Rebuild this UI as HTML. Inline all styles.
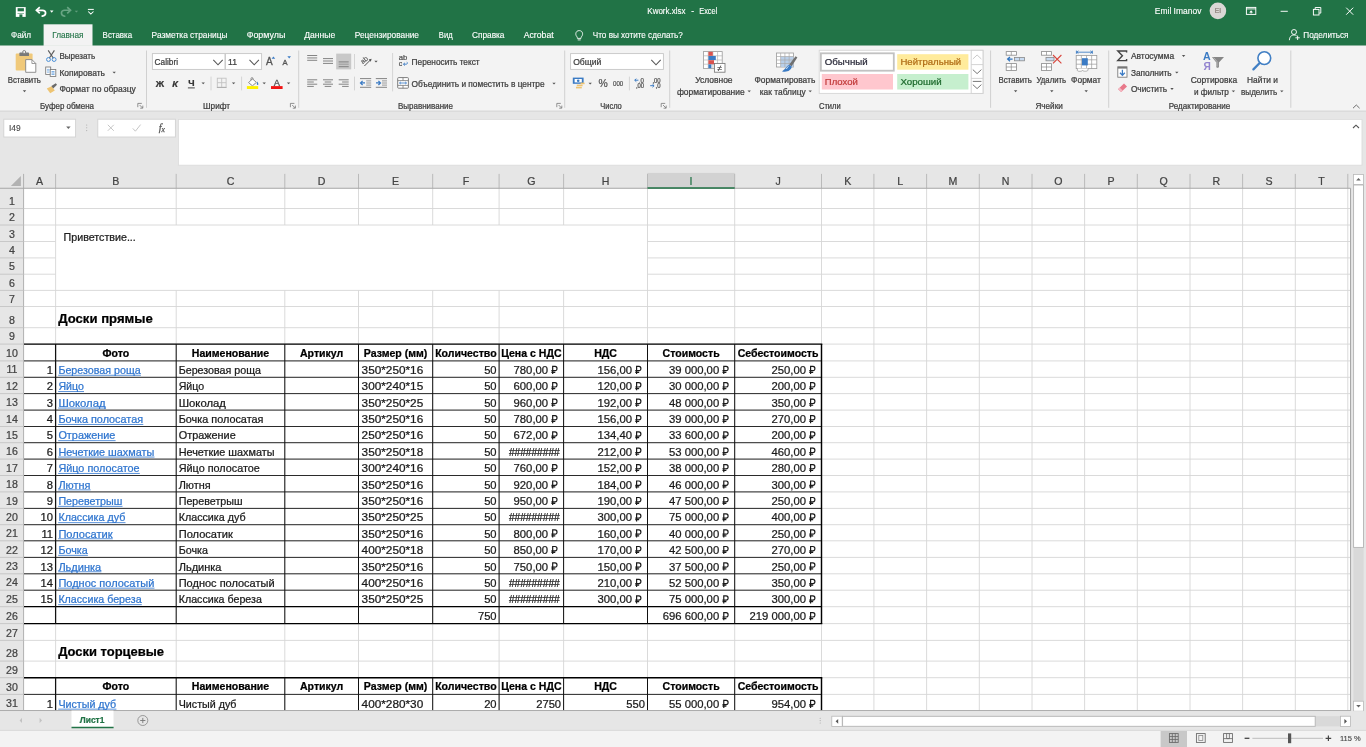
<!DOCTYPE html>
<html lang="ru"><head><meta charset="utf-8"><title>Kwork.xlsx - Excel</title>
<style>html,body{margin:0;padding:0;background:#e6e6e6;overflow:hidden}body{width:1366px;height:747px;font-family:"Liberation Sans",sans-serif}svg{display:block;filter:blur(0.35px)}text{font-family:"Liberation Sans",sans-serif;white-space:pre}.lk{text-decoration:underline;text-decoration-thickness:0.75px;text-underline-offset:0.9px;text-decoration-skip-ink:none}</style></head><body>
<svg width="1366" height="747" viewBox="0 0 1366 747" font-family="'Liberation Sans', sans-serif">
<rect x="0" y="0" width="1366" height="747" fill="#e6e6e6"/>
<rect x="0" y="0" width="1366" height="45.7" fill="#217346"/>
<rect x="0" y="45.7" width="1366" height="65.2" fill="#f3f3f3"/>
<line x1="0" y1="111.1" x2="1366" y2="111.1" stroke="#d4d4d4" stroke-width="1"/>
<rect x="15.8" y="7.1" width="9.9" height="9.8" fill="#fff"/>
<rect x="17.6" y="8.2" width="6.3" height="3.1" fill="#217346"/>
<rect x="17.5" y="13.1" width="6.5" height="0.9" fill="#217346" opacity="0.55"/>
<rect x="19.4" y="14.4" width="3" height="2.6" fill="#217346"/>
<path d="M39.8 7.2L36.4 10.3L39.8 13.4" fill="none" stroke="#fff" stroke-width="1.7" stroke-linejoin="miter"/>
<path d="M37.0 10.3H42.4C46.6 10.3 46.8 15.4 42.2 16.2" fill="none" stroke="#fff" stroke-width="1.7" stroke-linecap="round"/>
<path d="M49.9 10.55h3.6l-1.8 2.1z" fill="#fff"/>
<path d="M67.2 7.2L70.6 10.3L67.2 13.4" fill="none" stroke="#69a584" stroke-width="1.6" stroke-linejoin="miter"/>
<path d="M70.0 10.3H64.6C60.4 10.3 60.2 15.4 64.8 16.2" fill="none" stroke="#69a584" stroke-width="1.6" stroke-linecap="round"/>
<path d="M74.7 10.65h3.4l-1.7 1.9z" fill="#5f9d7b"/>
<line x1="87.9" y1="9.4" x2="93.8" y2="9.4" stroke="#fff" stroke-width="1"/>
<path d="M88.2 11.5L90.85 14.1L93.5 11.5" fill="none" stroke="#fff" stroke-width="1.05"/>
<text x="647.3" y="14.2" font-size="8.5" fill="#fff" textLength="38.2" lengthAdjust="spacingAndGlyphs" stroke="#fff" stroke-width="0.12">Kwork.xlsx</text>
<text x="691.2" y="14.2" font-size="8.5" fill="#fff" stroke="#fff" stroke-width="0.12">-</text>
<text x="699.2" y="14.2" font-size="8.5" fill="#fff" textLength="18.2" lengthAdjust="spacingAndGlyphs" stroke="#fff" stroke-width="0.12">Excel</text>
<text x="1154.8" y="14.2" font-size="8.5" fill="#fff" textLength="46.6" lengthAdjust="spacingAndGlyphs" stroke="#fff" stroke-width="0.12">Emil Imanov</text>
<circle cx="1217.9" cy="10.9" r="8.3" fill="#dad7d5"/>
<text x="1217.9" y="13.4" font-size="6.6" fill="#8c8079" text-anchor="middle" stroke="#8c8079" stroke-width="0.24">EI</text>
<rect x="1246.4" y="7.4" width="9.4" height="7" fill="none" stroke="#fff" stroke-width="0.95"/>
<path d="M1249.2 12.6L1251.1 10.3L1253 12.6Z M1250.6 12.4h1v1.2h-1z" fill="#fff"/>
<line x1="1246.4" y1="8.9" x2="1255.8" y2="8.9" stroke="#fff" stroke-width="0.9"/>
<line x1="1280.6" y1="11.3" x2="1287.8" y2="11.3" stroke="#fff" stroke-width="0.95"/>
<rect x="1313.4" y="9.4" width="5.6" height="5.6" fill="none" stroke="#fff" stroke-width="0.95"/>
<path d="M1315.2 9.2V7.5H1320.8V13.1H1319.2" fill="none" stroke="#fff" stroke-width="0.95"/>
<path d="M1346.2 7.7L1353.2 14.7M1353.2 7.7L1346.2 14.7" fill="none" stroke="#fff" stroke-width="1"/>
<circle cx="1294" cy="32" r="2.5" fill="none" stroke="#fff" stroke-width="0.9"/>
<path d="M1289.4 40.2C1289.6 36.4 1291.6 35.0 1294.0 35.0C1295.2 35.0 1296.0 35.3 1296.6 35.8" fill="none" stroke="#fff" stroke-width="0.9"/>
<path d="M1297.6 35.6V40.0M1295.4 37.8H1299.8" fill="none" stroke="#fff" stroke-width="0.9"/>
<text x="1303.3" y="37.8" font-size="8.35" fill="#fff" textLength="45.2" lengthAdjust="spacingAndGlyphs" stroke="#fff" stroke-width="0.12">Поделиться</text>
<rect x="43.6" y="24.3" width="48.9" height="21.6" fill="#f3f3f3"/>
<text x="11" y="37.8" font-size="8.35" fill="#fff" textLength="20" lengthAdjust="spacingAndGlyphs" stroke="#fff" stroke-width="0.12">Файл</text>
<text x="52.2" y="37.8" font-size="8.35" fill="#217346" textLength="31.2" lengthAdjust="spacingAndGlyphs" stroke="#217346" stroke-width="0.12">Главная</text>
<text x="102.6" y="37.8" font-size="8.35" fill="#fff" textLength="29.5" lengthAdjust="spacingAndGlyphs" stroke="#fff" stroke-width="0.12">Вставка</text>
<text x="151.6" y="37.8" font-size="8.35" fill="#fff" textLength="76" lengthAdjust="spacingAndGlyphs" stroke="#fff" stroke-width="0.12">Разметка страницы</text>
<text x="246.7" y="37.8" font-size="8.35" fill="#fff" textLength="38.6" lengthAdjust="spacingAndGlyphs" stroke="#fff" stroke-width="0.12">Формулы</text>
<text x="304.2" y="37.8" font-size="8.35" fill="#fff" textLength="31" lengthAdjust="spacingAndGlyphs" stroke="#fff" stroke-width="0.12">Данные</text>
<text x="354.8" y="37.8" font-size="8.35" fill="#fff" textLength="64.2" lengthAdjust="spacingAndGlyphs" stroke="#fff" stroke-width="0.12">Рецензирование</text>
<text x="438.8" y="37.8" font-size="8.35" fill="#fff" textLength="13.8" lengthAdjust="spacingAndGlyphs" stroke="#fff" stroke-width="0.12">Вид</text>
<text x="471.9" y="37.8" font-size="8.35" fill="#fff" textLength="32.6" lengthAdjust="spacingAndGlyphs" stroke="#fff" stroke-width="0.12">Справка</text>
<text x="523.7" y="37.8" font-size="8.35" fill="#fff" textLength="30" lengthAdjust="spacingAndGlyphs" stroke="#fff" stroke-width="0.12">Acrobat</text>
<path d="M576.6 36.2C575.2 34.8 575.4 30.6 579.2 30.6C583.0 30.6 583.2 34.8 581.8 36.2C581.2 36.9 581.0 37.6 581.0 38.4H577.4C577.4 37.6 577.2 36.9 576.6 36.2Z" fill="none" stroke="#fff" stroke-width="0.85"/>
<line x1="577.7" y1="39.9" x2="580.7" y2="39.9" stroke="#fff" stroke-width="0.85"/>
<text x="592.8" y="37.8" font-size="8.35" fill="#fff" textLength="90" lengthAdjust="spacingAndGlyphs" stroke="#fff" stroke-width="0.12">Что вы хотите сделать?</text>
<rect x="15.7" y="53.4" width="16.9" height="17.2" fill="#f0c97a" rx="1"/>
<rect x="19.4" y="52.6" width="9.6" height="3.4" fill="#7a7a7a" rx="0.6"/>
<circle cx="24.2" cy="52" r="1.5" fill="#f3f3f3" stroke="#7a7a7a" stroke-width="0.9"/>
<path d="M25.7 59.6H31.9L35.8 63.5V72.3H25.7Z" fill="#fff" stroke="#858585" stroke-width="0.9"/>
<path d="M31.9 59.6V63.5H35.8" fill="none" stroke="#858585" stroke-width="0.8"/>
<text x="7.7" y="83.3" font-size="8.35" fill="#3e3e3e" textLength="33.2" lengthAdjust="spacingAndGlyphs" stroke="#3e3e3e" stroke-width="0.24">Вставить</text>
<path d="M22.8 90.25h3.4l-1.7 1.9z" fill="#555"/>
<path d="M48.2 50.4L53.4 58.2M54.4 50.4L49.2 58.2" fill="none" stroke="#5e5e5e" stroke-width="1.15"/>
<circle cx="48.5" cy="59.5" r="1.95" fill="none" stroke="#4a8fd6" stroke-width="1"/>
<circle cx="54.1" cy="59.5" r="1.95" fill="none" stroke="#4a8fd6" stroke-width="1"/>
<text x="59.4" y="59" font-size="8.35" fill="#3e3e3e" textLength="35.7" lengthAdjust="spacingAndGlyphs" stroke="#3e3e3e" stroke-width="0.24">Вырезать</text>
<rect x="45.7" y="67" width="5" height="7.4" fill="#fff" stroke="#777" stroke-width="0.85"/>
<line x1="46.9" y1="69.4" x2="49.5" y2="69.4" stroke="#6aa3de" stroke-width="0.7"/>
<line x1="46.9" y1="70.8" x2="49.5" y2="70.8" stroke="#6aa3de" stroke-width="0.7"/>
<line x1="46.9" y1="72.2" x2="49.5" y2="72.2" stroke="#6aa3de" stroke-width="0.7"/>
<rect x="50.2" y="69.5" width="5.6" height="6.9" fill="#fff" stroke="#777" stroke-width="0.85"/>
<line x1="51.5" y1="71.6" x2="54.5" y2="71.6" stroke="#4a8fd6" stroke-width="0.75"/>
<line x1="51.5" y1="73" x2="54.5" y2="73" stroke="#4a8fd6" stroke-width="0.75"/>
<line x1="51.5" y1="74.4" x2="54.5" y2="74.4" stroke="#4a8fd6" stroke-width="0.75"/>
<text x="59.4" y="75.6" font-size="8.35" fill="#3e3e3e" textLength="45.6" lengthAdjust="spacingAndGlyphs" stroke="#3e3e3e" stroke-width="0.24">Копировать</text>
<path d="M112.5 71.65h3.4l-1.7 1.9z" fill="#555"/>
<path d="M46.8 88.6L51.6 86.2L54.8 90.6L50.2 93.2Z" fill="#eec472"/>
<path d="M51.4 86.0L55.8 83.2L57.0 84.8L53.2 88.6Z" fill="#6a6a6a"/>
<text x="59.4" y="92" font-size="8.35" fill="#3e3e3e" textLength="76.4" lengthAdjust="spacingAndGlyphs" stroke="#3e3e3e" stroke-width="0.24">Формат по образцу</text>
<text x="40" y="108.6" font-size="8.35" fill="#3e3e3e" textLength="54" lengthAdjust="spacingAndGlyphs" stroke="#3e3e3e" stroke-width="0.24">Буфер обмена</text>
<path d="M137.8 107.2V103.4H141.8" fill="none" stroke="#777" stroke-width="0.8"/>
<path d="M142.8 108.2H140.2M142.8 108.2V105.6M142.6 108L139.6 105" fill="none" stroke="#777" stroke-width="0.8"/>
<line x1="146.5" y1="50.5" x2="146.5" y2="107.8" stroke="#d0d0d0" stroke-width="1"/>
<rect x="152.4" y="53.6" width="72.6" height="15.8" fill="#fff" stroke="#c6c6c6" stroke-width="0.9"/>
<rect x="225.4" y="53.6" width="36.2" height="15.8" fill="#fff" stroke="#c6c6c6" stroke-width="0.9"/>
<text x="154.6" y="65" font-size="8.65" fill="#3e3e3e" textLength="23.4" lengthAdjust="spacingAndGlyphs" stroke="#3e3e3e" stroke-width="0.24">Calibri</text>
<text x="228" y="65" font-size="8.65" fill="#3e3e3e" stroke="#3e3e3e" stroke-width="0.24">11</text>
<path d="M213.3 59.85L218 64.75L222.7 59.85" fill="none" stroke="#555" stroke-width="1.05"/>
<path d="M249.5 59.85L254.2 64.75L258.9 59.85" fill="none" stroke="#555" stroke-width="1.05"/>
<text x="266" y="65.3" font-size="10" fill="#555" stroke="#555" stroke-width="0.3">A</text>
<path d="M271.6 58.8L273.4 56.4L275.2 58.8Z" fill="#3b7bc4"/>
<text x="282.5" y="65.3" font-size="7.6" fill="#555" stroke="#555" stroke-width="0.3">A</text>
<path d="M287.4 56.2H291.0L289.2 58.4Z" fill="#3b7bc4"/>
<text x="159.9" y="86.6" font-size="9.2" fill="#333" text-anchor="middle" font-weight="bold" stroke="#333" stroke-width="0.24">Ж</text>
<text x="175" y="86.6" font-size="9.2" fill="#333" text-anchor="middle" font-weight="bold" font-style="italic" stroke="#333" stroke-width="0.24">К</text>
<text x="191.3" y="86.4" font-size="9" fill="#333" text-anchor="middle" font-weight="bold" stroke="#333" stroke-width="0.24">Ч</text>
<line x1="187.9" y1="87.9" x2="194.8" y2="87.9" stroke="#333" stroke-width="0.9"/>
<path d="M201.5 82.45h3.4l-1.7 1.9z" fill="#555"/>
<line x1="211" y1="76.6" x2="211" y2="90.4" stroke="#d4d4d4" stroke-width="1"/>
<rect x="217.3" y="78.2" width="8.8" height="9" fill="none" stroke="#c2c2c2" stroke-width="0.9"/>
<line x1="221.7" y1="78.2" x2="221.7" y2="87.2" stroke="#c2c2c2" stroke-width="0.9"/>
<line x1="217.3" y1="82.7" x2="226.1" y2="82.7" stroke="#c2c2c2" stroke-width="0.9"/>
<line x1="216.9" y1="87.5" x2="226.5" y2="87.5" stroke="#b0b0b0" stroke-width="1"/>
<path d="M231.9 82.45h3.4l-1.7 1.9z" fill="#555"/>
<line x1="241.6" y1="76.6" x2="241.6" y2="90.4" stroke="#d4d4d4" stroke-width="1"/>
<path d="M248.6 82.6L252.4 78.8L256.4 82.4L252.4 85.8Z" fill="#fff" stroke="#7a7a7a" stroke-width="0.85" stroke-linejoin="round"/>
<path d="M251.0 80.4V78.6C251.0 77.2 253.0 77.2 253.0 78.6V79.6" fill="none" stroke="#7a7a7a" stroke-width="0.8"/>
<path d="M257.2 81.4C258.4 83.0 258.8 84.4 257.9 84.9C257.0 85.3 256.4 83.8 257.2 81.4Z" fill="#3b7bc4"/>
<rect x="246.9" y="86.1" width="11.3" height="2.9" fill="#fff200"/>
<path d="M262.5 82.45h3.4l-1.7 1.9z" fill="#555"/>
<text x="276.9" y="85.7" font-size="9.3" fill="#555" text-anchor="middle" stroke="#555" stroke-width="0.3">A</text>
<rect x="271" y="86.1" width="11.6" height="2.9" fill="#f01414"/>
<path d="M286.9 82.45h3.4l-1.7 1.9z" fill="#555"/>
<text x="203.1" y="108.6" font-size="8.35" fill="#3e3e3e" textLength="27" lengthAdjust="spacingAndGlyphs" stroke="#3e3e3e" stroke-width="0.24">Шрифт</text>
<path d="M290.4 107.2V103.4H294.4" fill="none" stroke="#777" stroke-width="0.8"/>
<path d="M295.4 108.2H292.8M295.4 108.2V105.6M295.2 108L292.2 105" fill="none" stroke="#777" stroke-width="0.8"/>
<line x1="298.7" y1="50.5" x2="298.7" y2="107.8" stroke="#d0d0d0" stroke-width="1"/>
<rect x="336.2" y="53.6" width="15" height="15.8" fill="#c8c8c8"/>
<line x1="307.2" y1="55.5" x2="317.2" y2="55.5" stroke="#7d7d7d" stroke-width="0.95"/>
<line x1="307.2" y1="57.9" x2="317.2" y2="57.9" stroke="#a9a9a9" stroke-width="1.5"/>
<line x1="307.2" y1="60.3" x2="317.2" y2="60.3" stroke="#7d7d7d" stroke-width="0.95"/>
<line x1="323" y1="58.6" x2="333" y2="58.6" stroke="#7d7d7d" stroke-width="0.95"/>
<line x1="323" y1="61" x2="333" y2="61" stroke="#a9a9a9" stroke-width="1.5"/>
<line x1="323" y1="63.4" x2="333" y2="63.4" stroke="#7d7d7d" stroke-width="0.95"/>
<line x1="338.7" y1="61.9" x2="348.7" y2="61.9" stroke="#7d7d7d" stroke-width="0.95"/>
<line x1="338.7" y1="64.3" x2="348.7" y2="64.3" stroke="#a9a9a9" stroke-width="1.5"/>
<line x1="338.7" y1="66.7" x2="348.7" y2="66.7" stroke="#7d7d7d" stroke-width="0.95"/>
<line x1="354.5" y1="54" x2="354.5" y2="69" stroke="#d4d4d4" stroke-width="1"/>
<line x1="307.2" y1="79.8" x2="317.2" y2="79.8" stroke="#7d7d7d" stroke-width="0.95"/>
<line x1="307.2" y1="82" x2="313.8" y2="82" stroke="#7d7d7d" stroke-width="0.95"/>
<line x1="307.2" y1="84.2" x2="317.2" y2="84.2" stroke="#7d7d7d" stroke-width="0.95"/>
<line x1="307.2" y1="86.4" x2="313.8" y2="86.4" stroke="#7d7d7d" stroke-width="0.95"/>
<line x1="323" y1="79.8" x2="333" y2="79.8" stroke="#7d7d7d" stroke-width="0.95"/>
<line x1="324.7" y1="82" x2="331.3" y2="82" stroke="#7d7d7d" stroke-width="0.95"/>
<line x1="323" y1="84.2" x2="333" y2="84.2" stroke="#7d7d7d" stroke-width="0.95"/>
<line x1="324.7" y1="86.4" x2="331.3" y2="86.4" stroke="#7d7d7d" stroke-width="0.95"/>
<line x1="338.7" y1="79.8" x2="348.7" y2="79.8" stroke="#7d7d7d" stroke-width="0.95"/>
<line x1="342.1" y1="82" x2="348.7" y2="82" stroke="#7d7d7d" stroke-width="0.95"/>
<line x1="338.7" y1="84.2" x2="348.7" y2="84.2" stroke="#7d7d7d" stroke-width="0.95"/>
<line x1="342.1" y1="86.4" x2="348.7" y2="86.4" stroke="#7d7d7d" stroke-width="0.95"/>
<line x1="354.5" y1="76.6" x2="354.5" y2="90.4" stroke="#d4d4d4" stroke-width="1"/>
<text transform="rotate(-42 364.2 60.4)" x="360.6" y="62.4" font-size="6.8" fill="#555" stroke="#555" stroke-width="0.15">ab</text>
<path d="M364.4 66.0L370.6 59.8" fill="none" stroke="#555" stroke-width="1"/>
<path d="M371.6 58.8L368.6 59.6L370.8 61.8Z" fill="#555"/>
<path d="M374.3 60.65h3.4l-1.7 1.9z" fill="#555"/>
<line x1="360" y1="78.6" x2="371.2" y2="78.6" stroke="#7d7d7d" stroke-width="0.95"/>
<line x1="360" y1="87.3" x2="371.2" y2="87.3" stroke="#7d7d7d" stroke-width="0.95"/>
<line x1="366.2" y1="80.9" x2="371.2" y2="80.9" stroke="#9a9a9a" stroke-width="1"/>
<line x1="366.2" y1="83" x2="371.2" y2="83" stroke="#9a9a9a" stroke-width="1"/>
<line x1="366.2" y1="85.1" x2="371.2" y2="85.1" stroke="#9a9a9a" stroke-width="1"/>
<path d="M365 82.95H360.6M362.6 80.9L360.5 82.95L362.6 85.0" fill="none" stroke="#3b7bc4" stroke-width="1.25"/>
<line x1="375.8" y1="78.6" x2="387" y2="78.6" stroke="#7d7d7d" stroke-width="0.95"/>
<line x1="375.8" y1="87.3" x2="387" y2="87.3" stroke="#7d7d7d" stroke-width="0.95"/>
<line x1="382" y1="80.9" x2="387" y2="80.9" stroke="#9a9a9a" stroke-width="1"/>
<line x1="382" y1="83" x2="387" y2="83" stroke="#9a9a9a" stroke-width="1"/>
<line x1="382" y1="85.1" x2="387" y2="85.1" stroke="#9a9a9a" stroke-width="1"/>
<path d="M376 82.95H380.4M378.4 80.9L380.5 82.95L378.4 85.0" fill="none" stroke="#3b7bc4" stroke-width="1.25"/>
<line x1="392.6" y1="53" x2="392.6" y2="91.4" stroke="#d4d4d4" stroke-width="1"/>
<text x="398.8" y="59.7" font-size="7" fill="#555" textLength="8.6" lengthAdjust="spacingAndGlyphs" stroke="#555" stroke-width="0.24">ab</text>
<text x="398.8" y="65.7" font-size="7" fill="#555" stroke="#555" stroke-width="0.24">c</text>
<path d="M403.6 64.2H406.4C407.6 64.2 407.6 62.2 406.8 62.0" fill="none" stroke="#3b7bc4" stroke-width="0.9"/>
<path d="M405.0 62.8L403.4 64.2L405.0 65.6" fill="none" stroke="#3b7bc4" stroke-width="0.9"/>
<text x="411.6" y="64.9" font-size="8.35" fill="#3e3e3e" textLength="68" lengthAdjust="spacingAndGlyphs" stroke="#3e3e3e" stroke-width="0.24">Переносить текст</text>
<rect x="397.7" y="77.6" width="10.7" height="10.6" fill="#fff" stroke="#777" stroke-width="0.95" rx="0.8"/>
<line x1="397.8" y1="80.6" x2="408.2" y2="80.6" stroke="#777" stroke-width="0.8"/>
<line x1="397.8" y1="85.4" x2="408.2" y2="85.4" stroke="#777" stroke-width="0.8"/>
<line x1="403" y1="77.7" x2="403" y2="80.6" stroke="#777" stroke-width="0.8"/>
<line x1="403" y1="85.4" x2="403" y2="88.3" stroke="#777" stroke-width="0.8"/>
<path d="M399.6 83.0H406.4M400.8 81.9L399.5 83.0L400.8 84.1M405.2 81.9L406.5 83.0L405.2 84.1" fill="none" stroke="#3b7bc4" stroke-width="0.85"/>
<text x="411.6" y="86.9" font-size="8.35" fill="#3e3e3e" textLength="133" lengthAdjust="spacingAndGlyphs" stroke="#3e3e3e" stroke-width="0.24">Объединить и поместить в центре</text>
<path d="M552.3 82.65h3.4l-1.7 1.9z" fill="#555"/>
<text x="398" y="108.6" font-size="8.35" fill="#3e3e3e" textLength="55" lengthAdjust="spacingAndGlyphs" stroke="#3e3e3e" stroke-width="0.24">Выравнивание</text>
<path d="M556.8 107.2V103.4H560.8" fill="none" stroke="#777" stroke-width="0.8"/>
<path d="M561.8 108.2H559.2M561.8 108.2V105.6M561.6 108L558.6 105" fill="none" stroke="#777" stroke-width="0.8"/>
<line x1="564.7" y1="50.5" x2="564.7" y2="107.8" stroke="#d0d0d0" stroke-width="1"/>
<rect x="570.6" y="53.6" width="92.8" height="15.8" fill="#fff" stroke="#c6c6c6" stroke-width="0.9"/>
<text x="573.2" y="65" font-size="8.65" fill="#3e3e3e" textLength="28.2" lengthAdjust="spacingAndGlyphs" stroke="#3e3e3e" stroke-width="0.24">Общий</text>
<path d="M651.3 59.85L656 64.75L660.7 59.85" fill="none" stroke="#555" stroke-width="1.05"/>
<rect x="572.8" y="77.6" width="10.8" height="6.2" fill="#3b7bc4"/>
<rect x="574.6" y="79" width="7.2" height="3.4" fill="#fff"/>
<circle cx="578.2" cy="80.7" r="1.3" fill="#3b7bc4"/>
<rect x="576.8" y="84.6" width="5.8" height="1.6" fill="#eec472"/>
<rect x="576" y="86.8" width="5.8" height="1.6" fill="#eec472"/>
<rect x="580.6" y="82.6" width="4" height="1.6" fill="#eec472"/>
<path d="M588.5 82.65h3.4l-1.7 1.9z" fill="#555"/>
<text x="603" y="87" font-size="10.4" fill="#555" text-anchor="middle" stroke="#555" stroke-width="0.24">%</text>
<text x="618.1" y="85.6" font-size="6.9" fill="#555" text-anchor="middle" textLength="10.2" lengthAdjust="spacingAndGlyphs" stroke="#555" stroke-width="0.24">000</text>
<line x1="629.4" y1="76.6" x2="629.4" y2="90.4" stroke="#d4d4d4" stroke-width="1"/>
<text x="640.4" y="82.7" font-size="6.3" fill="#555" textLength="3.4" lengthAdjust="spacingAndGlyphs" stroke="#555" stroke-width="0.24">0</text>
<text x="635.9" y="88.2" font-size="6.3" fill="#555" textLength="8.2" lengthAdjust="spacingAndGlyphs" stroke="#555" stroke-width="0.24">,00</text>
<circle cx="639.6" cy="82.3" r="0.45" fill="#555"/>
<path d="M638.4 80.2H634.8M636.3 78.7L634.7 80.2L636.3 81.7" fill="none" stroke="#3b7bc4" stroke-width="1"/>
<text x="652.4" y="82.7" font-size="6.3" fill="#555" textLength="8.2" lengthAdjust="spacingAndGlyphs" stroke="#555" stroke-width="0.24">,00</text>
<text x="655.6" y="88.2" font-size="6.3" fill="#555" textLength="5" lengthAdjust="spacingAndGlyphs" stroke="#555" stroke-width="0.24">,0</text>
<path d="M650.2 85.7H654.0M652.5 84.2L654.1 85.7L652.5 87.2" fill="none" stroke="#3b7bc4" stroke-width="1"/>
<text x="600.2" y="108.6" font-size="8.35" fill="#3e3e3e" textLength="21.6" lengthAdjust="spacingAndGlyphs" stroke="#3e3e3e" stroke-width="0.24">Число</text>
<path d="M661.2 107.2V103.4H665.2" fill="none" stroke="#777" stroke-width="0.8"/>
<path d="M666.2 108.2H663.6M666.2 108.2V105.6M666 108L663 105" fill="none" stroke="#777" stroke-width="0.8"/>
<line x1="669.7" y1="50.5" x2="669.7" y2="107.8" stroke="#d0d0d0" stroke-width="1"/>
<rect x="703.6" y="51.6" width="18.6" height="16.8" fill="#fff" stroke="#9a9a9a" stroke-width="0.8"/>
<line x1="708.25" y1="51.6" x2="708.25" y2="68.4" stroke="#b5b5b5" stroke-width="0.7"/>
<line x1="712.9" y1="51.6" x2="712.9" y2="68.4" stroke="#b5b5b5" stroke-width="0.7"/>
<line x1="717.55" y1="51.6" x2="717.55" y2="68.4" stroke="#b5b5b5" stroke-width="0.7"/>
<line x1="703.6" y1="55.8" x2="722.2" y2="55.8" stroke="#b5b5b5" stroke-width="0.7"/>
<line x1="703.6" y1="60" x2="722.2" y2="60" stroke="#b5b5b5" stroke-width="0.7"/>
<line x1="703.6" y1="64.2" x2="722.2" y2="64.2" stroke="#b5b5b5" stroke-width="0.7"/>
<rect x="708.4" y="51.8" width="4.4" height="4" fill="#d9534f"/>
<rect x="708.4" y="56" width="7.4" height="4" fill="#3b7bc4"/>
<rect x="708.4" y="60.2" width="5.6" height="4" fill="#d9534f"/>
<rect x="708.4" y="64.4" width="3" height="3.8" fill="#3b7bc4"/>
<rect x="714.4" y="63.4" width="10.6" height="8.8" fill="#fff" stroke="#777" stroke-width="0.85"/>
<text x="719.7" y="70.8" font-size="8.4" fill="#444" text-anchor="middle" stroke="#444" stroke-width="0.24">≠</text>
<text x="695.2" y="83.3" font-size="8.35" fill="#3e3e3e" textLength="37.4" lengthAdjust="spacingAndGlyphs" stroke="#3e3e3e" stroke-width="0.24">Условное</text>
<text x="676.9" y="95" font-size="8.35" fill="#3e3e3e" textLength="67.8" lengthAdjust="spacingAndGlyphs" stroke="#3e3e3e" stroke-width="0.24">форматирование</text>
<path d="M747.5 90.45h3.4l-1.7 1.9z" fill="#555"/>
<rect x="776.4" y="53" width="17" height="14" fill="#fff" stroke="#9a9a9a" stroke-width="0.8"/>
<rect x="780.6" y="56.6" width="12.8" height="10.4" fill="#b9cfe9"/>
<line x1="780.65" y1="53" x2="780.65" y2="67" stroke="#a9a9a9" stroke-width="0.7"/>
<line x1="784.9" y1="53" x2="784.9" y2="67" stroke="#a9a9a9" stroke-width="0.7"/>
<line x1="789.15" y1="53" x2="789.15" y2="67" stroke="#a9a9a9" stroke-width="0.7"/>
<line x1="776.4" y1="56.5" x2="793.4" y2="56.5" stroke="#a9a9a9" stroke-width="0.7"/>
<line x1="776.4" y1="60" x2="793.4" y2="60" stroke="#a9a9a9" stroke-width="0.7"/>
<line x1="776.4" y1="63.5" x2="793.4" y2="63.5" stroke="#a9a9a9" stroke-width="0.7"/>
<path d="M797.4 57.6L791.6 66.2L789.2 64.6L795.6 56.2Z" fill="#707070"/>
<path d="M789.4 65.0C786.8 65.4 786.2 68.6 782.0 71.4C786.8 72.6 791.2 70.8 791.8 66.6Z" fill="#3b7bc4"/>
<path d="M788.2 66.6C787.4 67.0 787.0 67.8 786.6 68.6" fill="none" stroke="#dbe8f7" stroke-width="1" stroke-linecap="round"/>
<text x="754.5" y="83.3" font-size="8.35" fill="#3e3e3e" textLength="60.8" lengthAdjust="spacingAndGlyphs" stroke="#3e3e3e" stroke-width="0.24">Форматировать</text>
<text x="759.7" y="95" font-size="8.35" fill="#3e3e3e" textLength="46" lengthAdjust="spacingAndGlyphs" stroke="#3e3e3e" stroke-width="0.24">как таблицу</text>
<path d="M808.5 90.45h3.4l-1.7 1.9z" fill="#555"/>
<rect x="819.2" y="50.3" width="163.8" height="43.1" fill="#fff" stroke="#d6d6d6" stroke-width="0.9"/>
<rect x="820.9" y="53.3" width="72.9" height="17.4" fill="#fff" stroke="#c2c2c2" stroke-width="1.8"/>
<text x="824.8" y="65" font-size="9.6" fill="#2b2b3a" textLength="42.8" lengthAdjust="spacingAndGlyphs" stroke="#2b2b3a" stroke-width="0.24">Обычный</text>
<rect x="897.2" y="54.2" width="71.2" height="15.5" fill="#ffeb9c"/>
<text x="900.4" y="65" font-size="9.6" fill="#b06b14" textLength="60.8" lengthAdjust="spacingAndGlyphs" stroke="#b06b14" stroke-width="0.24">Нейтральный</text>
<rect x="821.8" y="74" width="71.2" height="15.5" fill="#ffc7ce"/>
<text x="824.8" y="84.9" font-size="9.6" fill="#c23b3b" textLength="33" lengthAdjust="spacingAndGlyphs" stroke="#c23b3b" stroke-width="0.24">Плохой</text>
<rect x="897.2" y="74" width="71.2" height="15.5" fill="#c6efce"/>
<text x="900.4" y="84.9" font-size="9.6" fill="#1e6b2e" textLength="41.2" lengthAdjust="spacingAndGlyphs" stroke="#1e6b2e" stroke-width="0.24">Хороший</text>
<rect x="971.2" y="50.3" width="11.8" height="43.1" fill="#fff" stroke="#cfcfcf" stroke-width="0.9"/>
<line x1="971.2" y1="64.6" x2="983" y2="64.6" stroke="#cfcfcf" stroke-width="0.9"/>
<line x1="971.2" y1="78.4" x2="983" y2="78.4" stroke="#cfcfcf" stroke-width="0.9"/>
<path d="M972.8 59.0L977.1 55.0L981.4 59.0" fill="none" stroke="#c4c4c4" stroke-width="0.9"/>
<path d="M972.8 69.6L977.1 73.6L981.4 69.6" fill="none" stroke="#666" stroke-width="0.9"/>
<line x1="972.8" y1="81.4" x2="981.4" y2="81.4" stroke="#666" stroke-width="0.9"/>
<path d="M972.8 84.6L977.1 88.6L981.4 84.6" fill="none" stroke="#666" stroke-width="0.9"/>
<text x="819" y="108.6" font-size="8.35" fill="#3e3e3e" textLength="21.6" lengthAdjust="spacingAndGlyphs" stroke="#3e3e3e" stroke-width="0.24">Стили</text>
<line x1="990.6" y1="50.5" x2="990.6" y2="107.8" stroke="#d0d0d0" stroke-width="1"/>
<rect x="1006.2" y="51.6" width="10.2" height="3.6" fill="#fff" stroke="#8a8a8a" stroke-width="0.8"/>
<line x1="1011.3" y1="51.6" x2="1011.3" y2="55.2" stroke="#8a8a8a" stroke-width="0.7"/>
<rect x="1006.2" y="63.6" width="10.2" height="6.8" fill="#fff" stroke="#8a8a8a" stroke-width="0.8"/>
<line x1="1011.3" y1="63.6" x2="1011.3" y2="70.4" stroke="#8a8a8a" stroke-width="0.7"/>
<line x1="1006.2" y1="67" x2="1016.4" y2="67" stroke="#8a8a8a" stroke-width="0.7"/>
<rect x="1014.4" y="57.4" width="10.2" height="3.4" fill="#c9dcf2" stroke="#8a8a8a" stroke-width="0.8"/>
<line x1="1019.5" y1="57.4" x2="1019.5" y2="60.8" stroke="#8a8a8a" stroke-width="0.7"/>
<path d="M1012.6 59.1H1008.2M1010.0 57.0L1007.6 59.1L1010.0 61.2" fill="none" stroke="#2f74c0" stroke-width="1.2"/>
<text x="998.4" y="83.3" font-size="8.35" fill="#3e3e3e" textLength="33.4" lengthAdjust="spacingAndGlyphs" stroke="#3e3e3e" stroke-width="0.24">Вставить</text>
<path d="M1013.9 90.25h3.4l-1.7 1.9z" fill="#555"/>
<rect x="1041.4" y="51.6" width="10.2" height="3.6" fill="#fff" stroke="#8a8a8a" stroke-width="0.8"/>
<line x1="1046.5" y1="51.6" x2="1046.5" y2="55.2" stroke="#8a8a8a" stroke-width="0.7"/>
<rect x="1041.4" y="63.6" width="10.2" height="6.8" fill="#fff" stroke="#8a8a8a" stroke-width="0.8"/>
<line x1="1046.5" y1="63.6" x2="1046.5" y2="70.4" stroke="#8a8a8a" stroke-width="0.7"/>
<line x1="1041.4" y1="67" x2="1051.6" y2="67" stroke="#8a8a8a" stroke-width="0.7"/>
<rect x="1046" y="57.4" width="8" height="3.4" fill="#c9dcf2" stroke="#8a8a8a" stroke-width="0.8"/>
<path d="M1053.0 55.0L1061.4 63.4M1061.4 55.0L1053.0 63.4" fill="none" stroke="#d9453c" stroke-width="1.1"/>
<text x="1036.5" y="83.3" font-size="8.35" fill="#3e3e3e" textLength="29.6" lengthAdjust="spacingAndGlyphs" stroke="#3e3e3e" stroke-width="0.24">Удалить</text>
<path d="M1050.1 90.25h3.4l-1.7 1.9z" fill="#555"/>
<path d="M1076.4 52.2H1092.4M1076.4 50.6V53.8M1092.4 50.6V53.8M1078.4 50.8L1076.8 52.2L1078.4 53.6M1090.4 50.8L1092.0 52.2L1090.4 53.6" fill="none" stroke="#2f74c0" stroke-width="0.8"/>
<rect x="1076.2" y="55.4" width="20.6" height="13.2" fill="#fff" stroke="#9a9a9a" stroke-width="0.8"/>
<line x1="1081.35" y1="55.4" x2="1081.35" y2="68.6" stroke="#9a9a9a" stroke-width="0.7"/>
<line x1="1086.5" y1="55.4" x2="1086.5" y2="68.6" stroke="#9a9a9a" stroke-width="0.7"/>
<line x1="1091.65" y1="55.4" x2="1091.65" y2="68.6" stroke="#9a9a9a" stroke-width="0.7"/>
<line x1="1076.2" y1="59.8" x2="1096.8" y2="59.8" stroke="#9a9a9a" stroke-width="0.7"/>
<line x1="1076.2" y1="64.2" x2="1096.8" y2="64.2" stroke="#9a9a9a" stroke-width="0.7"/>
<rect x="1082" y="58.2" width="5.8" height="7.2" fill="#3b7bc4"/>
<path d="M1077.4 68.6V70.6C1077.4 71.6 1082.6 71.6 1082.6 70.2C1082.6 71.6 1088.0 71.6 1088.0 70.0V68.6" fill="#fff" stroke="#9a9a9a" stroke-width="0.8"/>
<text x="1071.1" y="83.3" font-size="8.35" fill="#3e3e3e" textLength="29.8" lengthAdjust="spacingAndGlyphs" stroke="#3e3e3e" stroke-width="0.24">Формат</text>
<path d="M1084.5 90.25h3.4l-1.7 1.9z" fill="#555"/>
<text x="1035.4" y="108.6" font-size="8.35" fill="#3e3e3e" textLength="27.4" lengthAdjust="spacingAndGlyphs" stroke="#3e3e3e" stroke-width="0.24">Ячейки</text>
<line x1="1108.7" y1="50.5" x2="1108.7" y2="107.8" stroke="#d0d0d0" stroke-width="1"/>
<path d="M1126.6 52.6V51.0H1117.8L1122.4 55.8L1117.8 60.6H1126.6V59.0" fill="none" stroke="#444" stroke-width="1.4"/>
<text x="1130.9" y="59" font-size="8.35" fill="#3e3e3e" textLength="43.2" lengthAdjust="spacingAndGlyphs" stroke="#3e3e3e" stroke-width="0.24">Автосумма</text>
<path d="M1181.9 55.05h3.4l-1.7 1.9z" fill="#555"/>
<rect x="1117.8" y="66.8" width="9.2" height="10.4" fill="#fff" stroke="#777" stroke-width="0.85"/>
<rect x="1117.8" y="66.8" width="9.2" height="1.8" fill="#777"/>
<path d="M1122.4 69.8V75.2M1120.0 72.8L1122.4 75.4L1124.8 72.8" fill="none" stroke="#3b7bc4" stroke-width="1.3"/>
<text x="1130.9" y="75.6" font-size="8.35" fill="#3e3e3e" textLength="40.8" lengthAdjust="spacingAndGlyphs" stroke="#3e3e3e" stroke-width="0.24">Заполнить</text>
<path d="M1175.1 71.65h3.4l-1.7 1.9z" fill="#555"/>
<path d="M1118.0 89.2L1124.0 83.6L1127.0 86.4L1121.2 92.0Z" fill="#e8788a"/>
<path d="M1118.0 89.2L1119.6 87.6L1122.8 90.6L1121.2 92.0Z" fill="#f4b6c0"/>
<text x="1130.9" y="92" font-size="8.35" fill="#3e3e3e" textLength="36.2" lengthAdjust="spacingAndGlyphs" stroke="#3e3e3e" stroke-width="0.24">Очистить</text>
<path d="M1170.3 88.05h3.4l-1.7 1.9z" fill="#555"/>
<text x="1203" y="59.9" font-size="10.6" fill="#3b7bc4" font-weight="bold">A</text>
<text x="1203.4" y="70.2" font-size="10.2" fill="#9384cf" font-weight="bold">Я</text>
<path d="M1212.0 57.0H1224.0L1218.9 62.4V67.0C1218.9 68.0 1216.3 68.0 1216.3 67.0V62.4Z" fill="#868686"/>
<path d="M1213.6 57.6L1217.0 61.6V66.6" fill="none" stroke="#c9c9c9" stroke-width="0.8"/>
<text x="1190.7" y="83.3" font-size="8.35" fill="#3e3e3e" textLength="46.4" lengthAdjust="spacingAndGlyphs" stroke="#3e3e3e" stroke-width="0.24">Сортировка</text>
<text x="1193.9" y="95" font-size="8.35" fill="#3e3e3e" textLength="35" lengthAdjust="spacingAndGlyphs" stroke="#3e3e3e" stroke-width="0.24">и фильтр</text>
<path d="M1231.7 90.45h3.4l-1.7 1.9z" fill="#555"/>
<circle cx="1264.3" cy="58.1" r="6.4" fill="#fff" stroke="#417fc4" stroke-width="1.6"/>
<line x1="1259.4" y1="63.2" x2="1253.4" y2="69.4" stroke="#417fc4" stroke-width="2.3" stroke-linecap="round"/>
<text x="1247.1" y="83.3" font-size="8.35" fill="#3e3e3e" textLength="30.8" lengthAdjust="spacingAndGlyphs" stroke="#3e3e3e" stroke-width="0.24">Найти и</text>
<text x="1241.1" y="95" font-size="8.35" fill="#3e3e3e" textLength="36" lengthAdjust="spacingAndGlyphs" stroke="#3e3e3e" stroke-width="0.24">выделить</text>
<path d="M1280.1 90.45h3.4l-1.7 1.9z" fill="#555"/>
<text x="1168.7" y="108.6" font-size="8.35" fill="#3e3e3e" textLength="61.6" lengthAdjust="spacingAndGlyphs" stroke="#3e3e3e" stroke-width="0.24">Редактирование</text>
<line x1="1290.8" y1="50.5" x2="1290.8" y2="107.8" stroke="#d0d0d0" stroke-width="1"/>
<path d="M1353 108.2L1356.3 105L1359.6 108.2" fill="none" stroke="#666" stroke-width="0.95"/>
<rect x="3.8" y="119.2" width="71.8" height="17.8" fill="#fff" stroke="#d2d2d2" stroke-width="0.9"/>
<text x="9" y="131.1" font-size="8.4" fill="#444" stroke="#444" stroke-width="0.1">I49</text>
<path d="M66.2 126.6h4.4l-2.2 2.4z" fill="#666"/>
<circle cx="86.7" cy="125" r="0.55" fill="#aaa"/>
<circle cx="86.7" cy="127.8" r="0.55" fill="#aaa"/>
<circle cx="86.7" cy="130.6" r="0.55" fill="#aaa"/>
<rect x="97.8" y="119.2" width="77.6" height="17.8" fill="#fff" stroke="#d2d2d2" stroke-width="0.9"/>
<path d="M107.8 124.8L113.8 130.8M113.8 124.8L107.8 130.8" fill="none" stroke="#c2c2c2" stroke-width="0.95"/>
<path d="M132.8 128.4L135.4 131.2L140.6 124.6" fill="none" stroke="#c2c2c2" stroke-width="0.95"/>
<text x="158.8" y="131.4" font-size="10.4" fill="#555" font-style="italic" style="font-family:'Liberation Serif', serif" stroke="#555" stroke-width="0.25">f</text>
<text x="161.6" y="131.8" font-size="7.6" fill="#555" font-style="italic" style="font-family:'Liberation Serif', serif" stroke="#555" stroke-width="0.25">x</text>
<rect x="178.4" y="119.4" width="1183.6" height="45.8" fill="#fff" stroke="#dcdcdc" stroke-width="0.9"/>
<path d="M1353.0 128.0L1356.0 125.2L1359.0 128.0" fill="none" stroke="#555" stroke-width="1.1"/>
<rect x="0" y="172.4" width="1350.6" height="15.9" fill="#e6e6e6"/>
<rect x="0" y="188.3" width="23.6" height="522.3" fill="#e6e6e6"/>
<rect x="23.6" y="188.3" width="1327" height="522.3" fill="#ffffff"/>
<clipPath id="shc"><rect x="0" y="172.4" width="1351.1" height="538.2"/></clipPath>
<g clip-path="url(#shc)">
<rect x="647.5" y="172.8" width="87.2" height="15.3" fill="#d2d2d2"/>
<line x1="23.6" y1="208.5" x2="1350.6" y2="208.5" stroke="#d6d6d6" stroke-width="0.9"/>
<line x1="23.6" y1="225" x2="1350.6" y2="225" stroke="#d6d6d6" stroke-width="0.9"/>
<line x1="23.6" y1="241.5" x2="55.6" y2="241.5" stroke="#d6d6d6" stroke-width="0.9"/>
<line x1="647.5" y1="241.5" x2="1350.6" y2="241.5" stroke="#d6d6d6" stroke-width="0.9"/>
<line x1="23.6" y1="257.9" x2="55.6" y2="257.9" stroke="#d6d6d6" stroke-width="0.9"/>
<line x1="647.5" y1="257.9" x2="1350.6" y2="257.9" stroke="#d6d6d6" stroke-width="0.9"/>
<line x1="23.6" y1="274.2" x2="55.6" y2="274.2" stroke="#d6d6d6" stroke-width="0.9"/>
<line x1="647.5" y1="274.2" x2="1350.6" y2="274.2" stroke="#d6d6d6" stroke-width="0.9"/>
<line x1="23.6" y1="290.4" x2="1350.6" y2="290.4" stroke="#d6d6d6" stroke-width="0.9"/>
<line x1="23.6" y1="306.5" x2="1350.6" y2="306.5" stroke="#d6d6d6" stroke-width="0.9"/>
<line x1="23.6" y1="327.7" x2="1350.6" y2="327.7" stroke="#d6d6d6" stroke-width="0.9"/>
<line x1="23.6" y1="344.1" x2="1350.6" y2="344.1" stroke="#d6d6d6" stroke-width="0.9"/>
<line x1="23.6" y1="360.9" x2="1350.6" y2="360.9" stroke="#d6d6d6" stroke-width="0.9"/>
<line x1="23.6" y1="377.3" x2="1350.6" y2="377.3" stroke="#d6d6d6" stroke-width="0.9"/>
<line x1="23.6" y1="393.6" x2="1350.6" y2="393.6" stroke="#d6d6d6" stroke-width="0.9"/>
<line x1="23.6" y1="410.1" x2="1350.6" y2="410.1" stroke="#d6d6d6" stroke-width="0.9"/>
<line x1="23.6" y1="426.5" x2="1350.6" y2="426.5" stroke="#d6d6d6" stroke-width="0.9"/>
<line x1="23.6" y1="442.7" x2="1350.6" y2="442.7" stroke="#d6d6d6" stroke-width="0.9"/>
<line x1="23.6" y1="459.1" x2="1350.6" y2="459.1" stroke="#d6d6d6" stroke-width="0.9"/>
<line x1="23.6" y1="475.5" x2="1350.6" y2="475.5" stroke="#d6d6d6" stroke-width="0.9"/>
<line x1="23.6" y1="491.9" x2="1350.6" y2="491.9" stroke="#d6d6d6" stroke-width="0.9"/>
<line x1="23.6" y1="508.4" x2="1350.6" y2="508.4" stroke="#d6d6d6" stroke-width="0.9"/>
<line x1="23.6" y1="524.7" x2="1350.6" y2="524.7" stroke="#d6d6d6" stroke-width="0.9"/>
<line x1="23.6" y1="540.8" x2="1350.6" y2="540.8" stroke="#d6d6d6" stroke-width="0.9"/>
<line x1="23.6" y1="557.4" x2="1350.6" y2="557.4" stroke="#d6d6d6" stroke-width="0.9"/>
<line x1="23.6" y1="573.8" x2="1350.6" y2="573.8" stroke="#d6d6d6" stroke-width="0.9"/>
<line x1="23.6" y1="590.2" x2="1350.6" y2="590.2" stroke="#d6d6d6" stroke-width="0.9"/>
<line x1="23.6" y1="606.7" x2="1350.6" y2="606.7" stroke="#d6d6d6" stroke-width="0.9"/>
<line x1="23.6" y1="623.6" x2="1350.6" y2="623.6" stroke="#d6d6d6" stroke-width="0.9"/>
<line x1="23.6" y1="640.4" x2="1350.6" y2="640.4" stroke="#d6d6d6" stroke-width="0.9"/>
<line x1="23.6" y1="661.1" x2="1350.6" y2="661.1" stroke="#d6d6d6" stroke-width="0.9"/>
<line x1="23.6" y1="677.7" x2="1350.6" y2="677.7" stroke="#d6d6d6" stroke-width="0.9"/>
<line x1="23.6" y1="694.4" x2="1350.6" y2="694.4" stroke="#d6d6d6" stroke-width="0.9"/>
<line x1="23.6" y1="711.2" x2="1350.6" y2="711.2" stroke="#d6d6d6" stroke-width="0.9"/>
<line x1="55.6" y1="188.3" x2="55.6" y2="710.6" stroke="#d6d6d6" stroke-width="0.9"/>
<line x1="176.2" y1="188.3" x2="176.2" y2="225" stroke="#d6d6d6" stroke-width="0.9"/>
<line x1="176.2" y1="290.4" x2="176.2" y2="710.6" stroke="#d6d6d6" stroke-width="0.9"/>
<line x1="284.8" y1="188.3" x2="284.8" y2="225" stroke="#d6d6d6" stroke-width="0.9"/>
<line x1="284.8" y1="290.4" x2="284.8" y2="710.6" stroke="#d6d6d6" stroke-width="0.9"/>
<line x1="358.5" y1="188.3" x2="358.5" y2="225" stroke="#d6d6d6" stroke-width="0.9"/>
<line x1="358.5" y1="290.4" x2="358.5" y2="710.6" stroke="#d6d6d6" stroke-width="0.9"/>
<line x1="432.7" y1="188.3" x2="432.7" y2="225" stroke="#d6d6d6" stroke-width="0.9"/>
<line x1="432.7" y1="290.4" x2="432.7" y2="710.6" stroke="#d6d6d6" stroke-width="0.9"/>
<line x1="499.1" y1="188.3" x2="499.1" y2="225" stroke="#d6d6d6" stroke-width="0.9"/>
<line x1="499.1" y1="290.4" x2="499.1" y2="710.6" stroke="#d6d6d6" stroke-width="0.9"/>
<line x1="563.6" y1="188.3" x2="563.6" y2="225" stroke="#d6d6d6" stroke-width="0.9"/>
<line x1="563.6" y1="290.4" x2="563.6" y2="710.6" stroke="#d6d6d6" stroke-width="0.9"/>
<line x1="647.5" y1="188.3" x2="647.5" y2="710.6" stroke="#d6d6d6" stroke-width="0.9"/>
<line x1="734.7" y1="188.3" x2="734.7" y2="710.6" stroke="#d6d6d6" stroke-width="0.9"/>
<line x1="821.5" y1="188.3" x2="821.5" y2="710.6" stroke="#d6d6d6" stroke-width="0.9"/>
<line x1="873.9" y1="188.3" x2="873.9" y2="710.6" stroke="#d6d6d6" stroke-width="0.9"/>
<line x1="926.6" y1="188.3" x2="926.6" y2="710.6" stroke="#d6d6d6" stroke-width="0.9"/>
<line x1="979.3" y1="188.3" x2="979.3" y2="710.6" stroke="#d6d6d6" stroke-width="0.9"/>
<line x1="1032" y1="188.3" x2="1032" y2="710.6" stroke="#d6d6d6" stroke-width="0.9"/>
<line x1="1084.6" y1="188.3" x2="1084.6" y2="710.6" stroke="#d6d6d6" stroke-width="0.9"/>
<line x1="1137.3" y1="188.3" x2="1137.3" y2="710.6" stroke="#d6d6d6" stroke-width="0.9"/>
<line x1="1190" y1="188.3" x2="1190" y2="710.6" stroke="#d6d6d6" stroke-width="0.9"/>
<line x1="1242.6" y1="188.3" x2="1242.6" y2="710.6" stroke="#d6d6d6" stroke-width="0.9"/>
<line x1="1295.3" y1="188.3" x2="1295.3" y2="710.6" stroke="#d6d6d6" stroke-width="0.9"/>
<line x1="1347.8" y1="188.3" x2="1347.8" y2="710.6" stroke="#d6d6d6" stroke-width="0.9"/>
<line x1="55.6" y1="173.9" x2="55.6" y2="188.3" stroke="#b4b4b4" stroke-width="0.9"/>
<line x1="176.2" y1="173.9" x2="176.2" y2="188.3" stroke="#b4b4b4" stroke-width="0.9"/>
<line x1="284.8" y1="173.9" x2="284.8" y2="188.3" stroke="#b4b4b4" stroke-width="0.9"/>
<line x1="358.5" y1="173.9" x2="358.5" y2="188.3" stroke="#b4b4b4" stroke-width="0.9"/>
<line x1="432.7" y1="173.9" x2="432.7" y2="188.3" stroke="#b4b4b4" stroke-width="0.9"/>
<line x1="499.1" y1="173.9" x2="499.1" y2="188.3" stroke="#b4b4b4" stroke-width="0.9"/>
<line x1="563.6" y1="173.9" x2="563.6" y2="188.3" stroke="#b4b4b4" stroke-width="0.9"/>
<line x1="647.5" y1="173.9" x2="647.5" y2="188.3" stroke="#b4b4b4" stroke-width="0.9"/>
<line x1="734.7" y1="173.9" x2="734.7" y2="188.3" stroke="#b4b4b4" stroke-width="0.9"/>
<line x1="821.5" y1="173.9" x2="821.5" y2="188.3" stroke="#b4b4b4" stroke-width="0.9"/>
<line x1="873.9" y1="173.9" x2="873.9" y2="188.3" stroke="#b4b4b4" stroke-width="0.9"/>
<line x1="926.6" y1="173.9" x2="926.6" y2="188.3" stroke="#b4b4b4" stroke-width="0.9"/>
<line x1="979.3" y1="173.9" x2="979.3" y2="188.3" stroke="#b4b4b4" stroke-width="0.9"/>
<line x1="1032" y1="173.9" x2="1032" y2="188.3" stroke="#b4b4b4" stroke-width="0.9"/>
<line x1="1084.6" y1="173.9" x2="1084.6" y2="188.3" stroke="#b4b4b4" stroke-width="0.9"/>
<line x1="1137.3" y1="173.9" x2="1137.3" y2="188.3" stroke="#b4b4b4" stroke-width="0.9"/>
<line x1="1190" y1="173.9" x2="1190" y2="188.3" stroke="#b4b4b4" stroke-width="0.9"/>
<line x1="1242.6" y1="173.9" x2="1242.6" y2="188.3" stroke="#b4b4b4" stroke-width="0.9"/>
<line x1="1295.3" y1="173.9" x2="1295.3" y2="188.3" stroke="#b4b4b4" stroke-width="0.9"/>
<line x1="1347.8" y1="173.9" x2="1347.8" y2="188.3" stroke="#b4b4b4" stroke-width="0.9"/>
<line x1="23.6" y1="173.9" x2="23.6" y2="710.6" stroke="#b0b0b0" stroke-width="1"/>
<line x1="0" y1="208.5" x2="23.6" y2="208.5" stroke="#c4c4c4" stroke-width="0.9"/>
<line x1="0" y1="225" x2="23.6" y2="225" stroke="#c4c4c4" stroke-width="0.9"/>
<line x1="0" y1="241.5" x2="23.6" y2="241.5" stroke="#c4c4c4" stroke-width="0.9"/>
<line x1="0" y1="257.9" x2="23.6" y2="257.9" stroke="#c4c4c4" stroke-width="0.9"/>
<line x1="0" y1="274.2" x2="23.6" y2="274.2" stroke="#c4c4c4" stroke-width="0.9"/>
<line x1="0" y1="290.4" x2="23.6" y2="290.4" stroke="#c4c4c4" stroke-width="0.9"/>
<line x1="0" y1="306.5" x2="23.6" y2="306.5" stroke="#c4c4c4" stroke-width="0.9"/>
<line x1="0" y1="327.7" x2="23.6" y2="327.7" stroke="#c4c4c4" stroke-width="0.9"/>
<line x1="0" y1="344.1" x2="23.6" y2="344.1" stroke="#c4c4c4" stroke-width="0.9"/>
<line x1="0" y1="360.9" x2="23.6" y2="360.9" stroke="#c4c4c4" stroke-width="0.9"/>
<line x1="0" y1="377.3" x2="23.6" y2="377.3" stroke="#c4c4c4" stroke-width="0.9"/>
<line x1="0" y1="393.6" x2="23.6" y2="393.6" stroke="#c4c4c4" stroke-width="0.9"/>
<line x1="0" y1="410.1" x2="23.6" y2="410.1" stroke="#c4c4c4" stroke-width="0.9"/>
<line x1="0" y1="426.5" x2="23.6" y2="426.5" stroke="#c4c4c4" stroke-width="0.9"/>
<line x1="0" y1="442.7" x2="23.6" y2="442.7" stroke="#c4c4c4" stroke-width="0.9"/>
<line x1="0" y1="459.1" x2="23.6" y2="459.1" stroke="#c4c4c4" stroke-width="0.9"/>
<line x1="0" y1="475.5" x2="23.6" y2="475.5" stroke="#c4c4c4" stroke-width="0.9"/>
<line x1="0" y1="491.9" x2="23.6" y2="491.9" stroke="#c4c4c4" stroke-width="0.9"/>
<line x1="0" y1="508.4" x2="23.6" y2="508.4" stroke="#c4c4c4" stroke-width="0.9"/>
<line x1="0" y1="524.7" x2="23.6" y2="524.7" stroke="#c4c4c4" stroke-width="0.9"/>
<line x1="0" y1="540.8" x2="23.6" y2="540.8" stroke="#c4c4c4" stroke-width="0.9"/>
<line x1="0" y1="557.4" x2="23.6" y2="557.4" stroke="#c4c4c4" stroke-width="0.9"/>
<line x1="0" y1="573.8" x2="23.6" y2="573.8" stroke="#c4c4c4" stroke-width="0.9"/>
<line x1="0" y1="590.2" x2="23.6" y2="590.2" stroke="#c4c4c4" stroke-width="0.9"/>
<line x1="0" y1="606.7" x2="23.6" y2="606.7" stroke="#c4c4c4" stroke-width="0.9"/>
<line x1="0" y1="623.6" x2="23.6" y2="623.6" stroke="#c4c4c4" stroke-width="0.9"/>
<line x1="0" y1="640.4" x2="23.6" y2="640.4" stroke="#c4c4c4" stroke-width="0.9"/>
<line x1="0" y1="661.1" x2="23.6" y2="661.1" stroke="#c4c4c4" stroke-width="0.9"/>
<line x1="0" y1="677.7" x2="23.6" y2="677.7" stroke="#c4c4c4" stroke-width="0.9"/>
<line x1="0" y1="694.4" x2="23.6" y2="694.4" stroke="#c4c4c4" stroke-width="0.9"/>
<line x1="0" y1="711.2" x2="23.6" y2="711.2" stroke="#c4c4c4" stroke-width="0.9"/>
<line x1="0" y1="188.3" x2="1350.6" y2="188.3" stroke="#a6a6a6" stroke-width="1.1"/>
<line x1="647.5" y1="188" x2="734.7" y2="188" stroke="#217346" stroke-width="1.5"/>
<path d="M20.9 176.0V186.0H10.9Z" fill="#b2b2b2"/>
<text x="39.6" y="184.6" font-size="10.6" fill="#444" text-anchor="middle" stroke="#444" stroke-width="0.24">A</text>
<text x="115.9" y="184.6" font-size="10.6" fill="#444" text-anchor="middle" stroke="#444" stroke-width="0.24">B</text>
<text x="230.5" y="184.6" font-size="10.6" fill="#444" text-anchor="middle" stroke="#444" stroke-width="0.24">C</text>
<text x="321.65" y="184.6" font-size="10.6" fill="#444" text-anchor="middle" stroke="#444" stroke-width="0.24">D</text>
<text x="395.6" y="184.6" font-size="10.6" fill="#444" text-anchor="middle" stroke="#444" stroke-width="0.24">E</text>
<text x="465.9" y="184.6" font-size="10.6" fill="#444" text-anchor="middle" stroke="#444" stroke-width="0.24">F</text>
<text x="531.35" y="184.6" font-size="10.6" fill="#444" text-anchor="middle" stroke="#444" stroke-width="0.24">G</text>
<text x="605.55" y="184.6" font-size="10.6" fill="#444" text-anchor="middle" stroke="#444" stroke-width="0.24">H</text>
<text x="691.1" y="184.6" font-size="10.6" fill="#217346" text-anchor="middle" stroke="#217346" stroke-width="0.24">I</text>
<text x="778.1" y="184.6" font-size="10.6" fill="#444" text-anchor="middle" stroke="#444" stroke-width="0.24">J</text>
<text x="847.7" y="184.6" font-size="10.6" fill="#444" text-anchor="middle" stroke="#444" stroke-width="0.24">K</text>
<text x="900.25" y="184.6" font-size="10.6" fill="#444" text-anchor="middle" stroke="#444" stroke-width="0.24">L</text>
<text x="952.95" y="184.6" font-size="10.6" fill="#444" text-anchor="middle" stroke="#444" stroke-width="0.24">M</text>
<text x="1005.65" y="184.6" font-size="10.6" fill="#444" text-anchor="middle" stroke="#444" stroke-width="0.24">N</text>
<text x="1058.3" y="184.6" font-size="10.6" fill="#444" text-anchor="middle" stroke="#444" stroke-width="0.24">O</text>
<text x="1110.95" y="184.6" font-size="10.6" fill="#444" text-anchor="middle" stroke="#444" stroke-width="0.24">P</text>
<text x="1163.65" y="184.6" font-size="10.6" fill="#444" text-anchor="middle" stroke="#444" stroke-width="0.24">Q</text>
<text x="1216.3" y="184.6" font-size="10.6" fill="#444" text-anchor="middle" stroke="#444" stroke-width="0.24">R</text>
<text x="1268.95" y="184.6" font-size="10.6" fill="#444" text-anchor="middle" stroke="#444" stroke-width="0.24">S</text>
<text x="1321.55" y="184.6" font-size="10.6" fill="#444" text-anchor="middle" stroke="#444" stroke-width="0.24">T</text>
<text x="11.9" y="204.6" font-size="10.6" fill="#444" text-anchor="middle" stroke="#444" stroke-width="0.24">1</text>
<text x="11.9" y="221.1" font-size="10.6" fill="#444" text-anchor="middle" stroke="#444" stroke-width="0.24">2</text>
<text x="11.9" y="237.6" font-size="10.6" fill="#444" text-anchor="middle" stroke="#444" stroke-width="0.24">3</text>
<text x="11.9" y="254" font-size="10.6" fill="#444" text-anchor="middle" stroke="#444" stroke-width="0.24">4</text>
<text x="11.9" y="270.3" font-size="10.6" fill="#444" text-anchor="middle" stroke="#444" stroke-width="0.24">5</text>
<text x="11.9" y="286.5" font-size="10.6" fill="#444" text-anchor="middle" stroke="#444" stroke-width="0.24">6</text>
<text x="11.9" y="302.6" font-size="10.6" fill="#444" text-anchor="middle" stroke="#444" stroke-width="0.24">7</text>
<text x="11.9" y="323.8" font-size="10.6" fill="#444" text-anchor="middle" stroke="#444" stroke-width="0.24">8</text>
<text x="11.9" y="340.2" font-size="10.6" fill="#444" text-anchor="middle" stroke="#444" stroke-width="0.24">9</text>
<text x="11.9" y="357" font-size="10.6" fill="#444" text-anchor="middle" stroke="#444" stroke-width="0.24">10</text>
<text x="11.9" y="373.4" font-size="10.6" fill="#444" text-anchor="middle" stroke="#444" stroke-width="0.24">11</text>
<text x="11.9" y="389.7" font-size="10.6" fill="#444" text-anchor="middle" stroke="#444" stroke-width="0.24">12</text>
<text x="11.9" y="406.2" font-size="10.6" fill="#444" text-anchor="middle" stroke="#444" stroke-width="0.24">13</text>
<text x="11.9" y="422.6" font-size="10.6" fill="#444" text-anchor="middle" stroke="#444" stroke-width="0.24">14</text>
<text x="11.9" y="438.8" font-size="10.6" fill="#444" text-anchor="middle" stroke="#444" stroke-width="0.24">15</text>
<text x="11.9" y="455.2" font-size="10.6" fill="#444" text-anchor="middle" stroke="#444" stroke-width="0.24">16</text>
<text x="11.9" y="471.6" font-size="10.6" fill="#444" text-anchor="middle" stroke="#444" stroke-width="0.24">17</text>
<text x="11.9" y="488" font-size="10.6" fill="#444" text-anchor="middle" stroke="#444" stroke-width="0.24">18</text>
<text x="11.9" y="504.5" font-size="10.6" fill="#444" text-anchor="middle" stroke="#444" stroke-width="0.24">19</text>
<text x="11.9" y="520.8" font-size="10.6" fill="#444" text-anchor="middle" stroke="#444" stroke-width="0.24">20</text>
<text x="11.9" y="536.9" font-size="10.6" fill="#444" text-anchor="middle" stroke="#444" stroke-width="0.24">21</text>
<text x="11.9" y="553.5" font-size="10.6" fill="#444" text-anchor="middle" stroke="#444" stroke-width="0.24">22</text>
<text x="11.9" y="569.9" font-size="10.6" fill="#444" text-anchor="middle" stroke="#444" stroke-width="0.24">23</text>
<text x="11.9" y="586.3" font-size="10.6" fill="#444" text-anchor="middle" stroke="#444" stroke-width="0.24">24</text>
<text x="11.9" y="602.8" font-size="10.6" fill="#444" text-anchor="middle" stroke="#444" stroke-width="0.24">25</text>
<text x="11.9" y="619.7" font-size="10.6" fill="#444" text-anchor="middle" stroke="#444" stroke-width="0.24">26</text>
<text x="11.9" y="636.5" font-size="10.6" fill="#444" text-anchor="middle" stroke="#444" stroke-width="0.24">27</text>
<text x="11.9" y="657.2" font-size="10.6" fill="#444" text-anchor="middle" stroke="#444" stroke-width="0.24">28</text>
<text x="11.9" y="673.8" font-size="10.6" fill="#444" text-anchor="middle" stroke="#444" stroke-width="0.24">29</text>
<text x="11.9" y="690.5" font-size="10.6" fill="#444" text-anchor="middle" stroke="#444" stroke-width="0.24">30</text>
<text x="11.9" y="707.3" font-size="10.6" fill="#444" text-anchor="middle" stroke="#444" stroke-width="0.24">31</text>
<text x="63.6" y="240.6" font-size="10" fill="#222" textLength="72.2" lengthAdjust="spacingAndGlyphs" stroke="#222" stroke-width="0.24">Приветствие...</text>
<text x="58.2" y="322.7" font-size="13.2" fill="#000" font-weight="bold" textLength="94.6" lengthAdjust="spacingAndGlyphs" stroke="#000" stroke-width="0.24">Доски прямые</text>
<text x="58.2" y="656.1" font-size="13.2" fill="#000" font-weight="bold" textLength="105.8" lengthAdjust="spacingAndGlyphs" stroke="#000" stroke-width="0.24">Доски торцевые</text>
<text x="115.9" y="356.7" font-size="10.55" fill="#000" text-anchor="middle" font-weight="bold" stroke="#000" stroke-width="0.24">Фото</text>
<text x="230.5" y="356.7" font-size="10.55" fill="#000" text-anchor="middle" font-weight="bold" stroke="#000" stroke-width="0.24">Наименование</text>
<text x="321.65" y="356.7" font-size="10.55" fill="#000" text-anchor="middle" font-weight="bold" stroke="#000" stroke-width="0.24">Артикул</text>
<text x="395.6" y="356.7" font-size="10.55" fill="#000" text-anchor="middle" font-weight="bold" stroke="#000" stroke-width="0.24">Размер (мм)</text>
<text x="465.9" y="356.7" font-size="10.55" fill="#000" text-anchor="middle" font-weight="bold" stroke="#000" stroke-width="0.24">Количество</text>
<text x="531.35" y="356.7" font-size="10.55" fill="#000" text-anchor="middle" font-weight="bold" stroke="#000" stroke-width="0.24">Цена с НДС</text>
<text x="605.55" y="356.7" font-size="10.55" fill="#000" text-anchor="middle" font-weight="bold" stroke="#000" stroke-width="0.24">НДС</text>
<text x="691.1" y="356.7" font-size="10.55" fill="#000" text-anchor="middle" font-weight="bold" stroke="#000" stroke-width="0.24">Стоимость</text>
<text x="778.1" y="356.7" font-size="10.55" fill="#000" text-anchor="middle" font-weight="bold" stroke="#000" stroke-width="0.24">Себестоимость</text>
<text x="115.9" y="690.2" font-size="10.55" fill="#000" text-anchor="middle" font-weight="bold" stroke="#000" stroke-width="0.24">Фото</text>
<text x="230.5" y="690.2" font-size="10.55" fill="#000" text-anchor="middle" font-weight="bold" stroke="#000" stroke-width="0.24">Наименование</text>
<text x="321.65" y="690.2" font-size="10.55" fill="#000" text-anchor="middle" font-weight="bold" stroke="#000" stroke-width="0.24">Артикул</text>
<text x="395.6" y="690.2" font-size="10.55" fill="#000" text-anchor="middle" font-weight="bold" stroke="#000" stroke-width="0.24">Размер (мм)</text>
<text x="465.9" y="690.2" font-size="10.55" fill="#000" text-anchor="middle" font-weight="bold" stroke="#000" stroke-width="0.24">Количество</text>
<text x="531.35" y="690.2" font-size="10.55" fill="#000" text-anchor="middle" font-weight="bold" stroke="#000" stroke-width="0.24">Цена с НДС</text>
<text x="605.55" y="690.2" font-size="10.55" fill="#000" text-anchor="middle" font-weight="bold" stroke="#000" stroke-width="0.24">НДС</text>
<text x="691.1" y="690.2" font-size="10.55" fill="#000" text-anchor="middle" font-weight="bold" stroke="#000" stroke-width="0.24">Стоимость</text>
<text x="778.1" y="690.2" font-size="10.55" fill="#000" text-anchor="middle" font-weight="bold" stroke="#000" stroke-width="0.24">Себестоимость</text>
<text x="53" y="374" font-size="11.2" fill="#1a1a1a" text-anchor="end" stroke="#1a1a1a" stroke-width="0.24">1</text>
<text x="58.4" y="374" font-size="10.7" fill="#2f75cf" textLength="82.3" lengthAdjust="spacingAndGlyphs" stroke="#2f75cf" stroke-width="0.24">Березовая роща</text>
<line x1="58.2" y1="375.25" x2="140.9" y2="375.25" stroke="#2f75cf" stroke-width="0.8"/>
<text x="178.7" y="374" font-size="10.7" fill="#1a1a1a" textLength="82.3" lengthAdjust="spacingAndGlyphs" stroke="#1a1a1a" stroke-width="0.24">Березовая роща</text>
<text x="361.6" y="374" font-size="10.75" fill="#1a1a1a" textLength="61.6" lengthAdjust="spacingAndGlyphs" stroke="#1a1a1a" stroke-width="0.24">350*250*16</text>
<text x="496.6" y="374" font-size="11.2" fill="#1a1a1a" text-anchor="end" stroke="#1a1a1a" stroke-width="0.24">50</text>
<g transform="translate(550.98 374) scale(1)">
<path d="M1.7 0V-7.6H4.1C5.8 -7.6 6.0 -6.5 6.0 -5.5C6.0 -4.4 5.6 -3.3 4.1 -3.3H0.4M0.4 -1.7H4.3" fill="none" stroke="#1a1a1a" stroke-width="1.2"/>
</g>
<text x="548.1" y="374" font-size="11.3" fill="#1a1a1a" text-anchor="end" stroke="#1a1a1a" stroke-width="0.24">780,00</text>
<g transform="translate(634.88 374) scale(1)">
<path d="M1.7 0V-7.6H4.1C5.8 -7.6 6.0 -6.5 6.0 -5.5C6.0 -4.4 5.6 -3.3 4.1 -3.3H0.4M0.4 -1.7H4.3" fill="none" stroke="#1a1a1a" stroke-width="1.2"/>
</g>
<text x="632" y="374" font-size="11.3" fill="#1a1a1a" text-anchor="end" stroke="#1a1a1a" stroke-width="0.24">156,00</text>
<g transform="translate(722.08 374) scale(1)">
<path d="M1.7 0V-7.6H4.1C5.8 -7.6 6.0 -6.5 6.0 -5.5C6.0 -4.4 5.6 -3.3 4.1 -3.3H0.4M0.4 -1.7H4.3" fill="none" stroke="#1a1a1a" stroke-width="1.2"/>
</g>
<text x="719.2" y="374" font-size="11.3" fill="#1a1a1a" text-anchor="end" stroke="#1a1a1a" stroke-width="0.24">39 000,00</text>
<g transform="translate(808.88 374) scale(1)">
<path d="M1.7 0V-7.6H4.1C5.8 -7.6 6.0 -6.5 6.0 -5.5C6.0 -4.4 5.6 -3.3 4.1 -3.3H0.4M0.4 -1.7H4.3" fill="none" stroke="#1a1a1a" stroke-width="1.2"/>
</g>
<text x="806" y="374" font-size="11.3" fill="#1a1a1a" text-anchor="end" stroke="#1a1a1a" stroke-width="0.24">250,00</text>
<text x="53" y="390.3" font-size="11.2" fill="#1a1a1a" text-anchor="end" stroke="#1a1a1a" stroke-width="0.24">2</text>
<text x="58.4" y="390.3" font-size="10.7" fill="#2f75cf" textLength="25.4" lengthAdjust="spacingAndGlyphs" stroke="#2f75cf" stroke-width="0.24">Яйцо</text>
<line x1="58.2" y1="391.55" x2="84" y2="391.55" stroke="#2f75cf" stroke-width="0.8"/>
<text x="178.7" y="390.3" font-size="10.7" fill="#1a1a1a" textLength="25.4" lengthAdjust="spacingAndGlyphs" stroke="#1a1a1a" stroke-width="0.24">Яйцо</text>
<text x="361.6" y="390.3" font-size="10.75" fill="#1a1a1a" textLength="61.6" lengthAdjust="spacingAndGlyphs" stroke="#1a1a1a" stroke-width="0.24">300*240*15</text>
<text x="496.6" y="390.3" font-size="11.2" fill="#1a1a1a" text-anchor="end" stroke="#1a1a1a" stroke-width="0.24">50</text>
<g transform="translate(550.98 390.3) scale(1)">
<path d="M1.7 0V-7.6H4.1C5.8 -7.6 6.0 -6.5 6.0 -5.5C6.0 -4.4 5.6 -3.3 4.1 -3.3H0.4M0.4 -1.7H4.3" fill="none" stroke="#1a1a1a" stroke-width="1.2"/>
</g>
<text x="548.1" y="390.3" font-size="11.3" fill="#1a1a1a" text-anchor="end" stroke="#1a1a1a" stroke-width="0.24">600,00</text>
<g transform="translate(634.88 390.3) scale(1)">
<path d="M1.7 0V-7.6H4.1C5.8 -7.6 6.0 -6.5 6.0 -5.5C6.0 -4.4 5.6 -3.3 4.1 -3.3H0.4M0.4 -1.7H4.3" fill="none" stroke="#1a1a1a" stroke-width="1.2"/>
</g>
<text x="632" y="390.3" font-size="11.3" fill="#1a1a1a" text-anchor="end" stroke="#1a1a1a" stroke-width="0.24">120,00</text>
<g transform="translate(722.08 390.3) scale(1)">
<path d="M1.7 0V-7.6H4.1C5.8 -7.6 6.0 -6.5 6.0 -5.5C6.0 -4.4 5.6 -3.3 4.1 -3.3H0.4M0.4 -1.7H4.3" fill="none" stroke="#1a1a1a" stroke-width="1.2"/>
</g>
<text x="719.2" y="390.3" font-size="11.3" fill="#1a1a1a" text-anchor="end" stroke="#1a1a1a" stroke-width="0.24">30 000,00</text>
<g transform="translate(808.88 390.3) scale(1)">
<path d="M1.7 0V-7.6H4.1C5.8 -7.6 6.0 -6.5 6.0 -5.5C6.0 -4.4 5.6 -3.3 4.1 -3.3H0.4M0.4 -1.7H4.3" fill="none" stroke="#1a1a1a" stroke-width="1.2"/>
</g>
<text x="806" y="390.3" font-size="11.3" fill="#1a1a1a" text-anchor="end" stroke="#1a1a1a" stroke-width="0.24">200,00</text>
<text x="53" y="406.8" font-size="11.2" fill="#1a1a1a" text-anchor="end" stroke="#1a1a1a" stroke-width="0.24">3</text>
<text x="58.4" y="406.8" font-size="10.7" fill="#2f75cf" textLength="47.2" lengthAdjust="spacingAndGlyphs" stroke="#2f75cf" stroke-width="0.24">Шоколад</text>
<line x1="58.2" y1="408.05" x2="105.8" y2="408.05" stroke="#2f75cf" stroke-width="0.8"/>
<text x="178.7" y="406.8" font-size="10.7" fill="#1a1a1a" textLength="47.2" lengthAdjust="spacingAndGlyphs" stroke="#1a1a1a" stroke-width="0.24">Шоколад</text>
<text x="361.6" y="406.8" font-size="10.75" fill="#1a1a1a" textLength="61.6" lengthAdjust="spacingAndGlyphs" stroke="#1a1a1a" stroke-width="0.24">350*250*25</text>
<text x="496.6" y="406.8" font-size="11.2" fill="#1a1a1a" text-anchor="end" stroke="#1a1a1a" stroke-width="0.24">50</text>
<g transform="translate(550.98 406.8) scale(1)">
<path d="M1.7 0V-7.6H4.1C5.8 -7.6 6.0 -6.5 6.0 -5.5C6.0 -4.4 5.6 -3.3 4.1 -3.3H0.4M0.4 -1.7H4.3" fill="none" stroke="#1a1a1a" stroke-width="1.2"/>
</g>
<text x="548.1" y="406.8" font-size="11.3" fill="#1a1a1a" text-anchor="end" stroke="#1a1a1a" stroke-width="0.24">960,00</text>
<g transform="translate(634.88 406.8) scale(1)">
<path d="M1.7 0V-7.6H4.1C5.8 -7.6 6.0 -6.5 6.0 -5.5C6.0 -4.4 5.6 -3.3 4.1 -3.3H0.4M0.4 -1.7H4.3" fill="none" stroke="#1a1a1a" stroke-width="1.2"/>
</g>
<text x="632" y="406.8" font-size="11.3" fill="#1a1a1a" text-anchor="end" stroke="#1a1a1a" stroke-width="0.24">192,00</text>
<g transform="translate(722.08 406.8) scale(1)">
<path d="M1.7 0V-7.6H4.1C5.8 -7.6 6.0 -6.5 6.0 -5.5C6.0 -4.4 5.6 -3.3 4.1 -3.3H0.4M0.4 -1.7H4.3" fill="none" stroke="#1a1a1a" stroke-width="1.2"/>
</g>
<text x="719.2" y="406.8" font-size="11.3" fill="#1a1a1a" text-anchor="end" stroke="#1a1a1a" stroke-width="0.24">48 000,00</text>
<g transform="translate(808.88 406.8) scale(1)">
<path d="M1.7 0V-7.6H4.1C5.8 -7.6 6.0 -6.5 6.0 -5.5C6.0 -4.4 5.6 -3.3 4.1 -3.3H0.4M0.4 -1.7H4.3" fill="none" stroke="#1a1a1a" stroke-width="1.2"/>
</g>
<text x="806" y="406.8" font-size="11.3" fill="#1a1a1a" text-anchor="end" stroke="#1a1a1a" stroke-width="0.24">350,00</text>
<text x="53" y="423.2" font-size="11.2" fill="#1a1a1a" text-anchor="end" stroke="#1a1a1a" stroke-width="0.24">4</text>
<text x="58.4" y="423.2" font-size="10.7" fill="#2f75cf" textLength="84.7" lengthAdjust="spacingAndGlyphs" stroke="#2f75cf" stroke-width="0.24">Бочка полосатая</text>
<line x1="58.2" y1="424.45" x2="143.3" y2="424.45" stroke="#2f75cf" stroke-width="0.8"/>
<text x="178.7" y="423.2" font-size="10.7" fill="#1a1a1a" textLength="84.7" lengthAdjust="spacingAndGlyphs" stroke="#1a1a1a" stroke-width="0.24">Бочка полосатая</text>
<text x="361.6" y="423.2" font-size="10.75" fill="#1a1a1a" textLength="61.6" lengthAdjust="spacingAndGlyphs" stroke="#1a1a1a" stroke-width="0.24">350*250*16</text>
<text x="496.6" y="423.2" font-size="11.2" fill="#1a1a1a" text-anchor="end" stroke="#1a1a1a" stroke-width="0.24">50</text>
<g transform="translate(550.98 423.2) scale(1)">
<path d="M1.7 0V-7.6H4.1C5.8 -7.6 6.0 -6.5 6.0 -5.5C6.0 -4.4 5.6 -3.3 4.1 -3.3H0.4M0.4 -1.7H4.3" fill="none" stroke="#1a1a1a" stroke-width="1.2"/>
</g>
<text x="548.1" y="423.2" font-size="11.3" fill="#1a1a1a" text-anchor="end" stroke="#1a1a1a" stroke-width="0.24">780,00</text>
<g transform="translate(634.88 423.2) scale(1)">
<path d="M1.7 0V-7.6H4.1C5.8 -7.6 6.0 -6.5 6.0 -5.5C6.0 -4.4 5.6 -3.3 4.1 -3.3H0.4M0.4 -1.7H4.3" fill="none" stroke="#1a1a1a" stroke-width="1.2"/>
</g>
<text x="632" y="423.2" font-size="11.3" fill="#1a1a1a" text-anchor="end" stroke="#1a1a1a" stroke-width="0.24">156,00</text>
<g transform="translate(722.08 423.2) scale(1)">
<path d="M1.7 0V-7.6H4.1C5.8 -7.6 6.0 -6.5 6.0 -5.5C6.0 -4.4 5.6 -3.3 4.1 -3.3H0.4M0.4 -1.7H4.3" fill="none" stroke="#1a1a1a" stroke-width="1.2"/>
</g>
<text x="719.2" y="423.2" font-size="11.3" fill="#1a1a1a" text-anchor="end" stroke="#1a1a1a" stroke-width="0.24">39 000,00</text>
<g transform="translate(808.88 423.2) scale(1)">
<path d="M1.7 0V-7.6H4.1C5.8 -7.6 6.0 -6.5 6.0 -5.5C6.0 -4.4 5.6 -3.3 4.1 -3.3H0.4M0.4 -1.7H4.3" fill="none" stroke="#1a1a1a" stroke-width="1.2"/>
</g>
<text x="806" y="423.2" font-size="11.3" fill="#1a1a1a" text-anchor="end" stroke="#1a1a1a" stroke-width="0.24">270,00</text>
<text x="53" y="439.4" font-size="11.2" fill="#1a1a1a" text-anchor="end" stroke="#1a1a1a" stroke-width="0.24">5</text>
<text x="58.4" y="439.4" font-size="10.7" fill="#2f75cf" textLength="57" lengthAdjust="spacingAndGlyphs" stroke="#2f75cf" stroke-width="0.24">Отражение</text>
<line x1="58.2" y1="440.65" x2="115.6" y2="440.65" stroke="#2f75cf" stroke-width="0.8"/>
<text x="178.7" y="439.4" font-size="10.7" fill="#1a1a1a" textLength="57" lengthAdjust="spacingAndGlyphs" stroke="#1a1a1a" stroke-width="0.24">Отражение</text>
<text x="361.6" y="439.4" font-size="10.75" fill="#1a1a1a" textLength="61.6" lengthAdjust="spacingAndGlyphs" stroke="#1a1a1a" stroke-width="0.24">250*250*16</text>
<text x="496.6" y="439.4" font-size="11.2" fill="#1a1a1a" text-anchor="end" stroke="#1a1a1a" stroke-width="0.24">50</text>
<g transform="translate(550.98 439.4) scale(1)">
<path d="M1.7 0V-7.6H4.1C5.8 -7.6 6.0 -6.5 6.0 -5.5C6.0 -4.4 5.6 -3.3 4.1 -3.3H0.4M0.4 -1.7H4.3" fill="none" stroke="#1a1a1a" stroke-width="1.2"/>
</g>
<text x="548.1" y="439.4" font-size="11.3" fill="#1a1a1a" text-anchor="end" stroke="#1a1a1a" stroke-width="0.24">672,00</text>
<g transform="translate(634.88 439.4) scale(1)">
<path d="M1.7 0V-7.6H4.1C5.8 -7.6 6.0 -6.5 6.0 -5.5C6.0 -4.4 5.6 -3.3 4.1 -3.3H0.4M0.4 -1.7H4.3" fill="none" stroke="#1a1a1a" stroke-width="1.2"/>
</g>
<text x="632" y="439.4" font-size="11.3" fill="#1a1a1a" text-anchor="end" stroke="#1a1a1a" stroke-width="0.24">134,40</text>
<g transform="translate(722.08 439.4) scale(1)">
<path d="M1.7 0V-7.6H4.1C5.8 -7.6 6.0 -6.5 6.0 -5.5C6.0 -4.4 5.6 -3.3 4.1 -3.3H0.4M0.4 -1.7H4.3" fill="none" stroke="#1a1a1a" stroke-width="1.2"/>
</g>
<text x="719.2" y="439.4" font-size="11.3" fill="#1a1a1a" text-anchor="end" stroke="#1a1a1a" stroke-width="0.24">33 600,00</text>
<g transform="translate(808.88 439.4) scale(1)">
<path d="M1.7 0V-7.6H4.1C5.8 -7.6 6.0 -6.5 6.0 -5.5C6.0 -4.4 5.6 -3.3 4.1 -3.3H0.4M0.4 -1.7H4.3" fill="none" stroke="#1a1a1a" stroke-width="1.2"/>
</g>
<text x="806" y="439.4" font-size="11.3" fill="#1a1a1a" text-anchor="end" stroke="#1a1a1a" stroke-width="0.24">200,00</text>
<text x="53" y="455.8" font-size="11.2" fill="#1a1a1a" text-anchor="end" stroke="#1a1a1a" stroke-width="0.24">6</text>
<text x="58.4" y="455.8" font-size="10.7" fill="#2f75cf" textLength="95.9" lengthAdjust="spacingAndGlyphs" stroke="#2f75cf" stroke-width="0.24">Нечеткие шахматы</text>
<line x1="58.2" y1="457.05" x2="154.5" y2="457.05" stroke="#2f75cf" stroke-width="0.8"/>
<text x="178.7" y="455.8" font-size="10.7" fill="#1a1a1a" textLength="95.9" lengthAdjust="spacingAndGlyphs" stroke="#1a1a1a" stroke-width="0.24">Нечеткие шахматы</text>
<text x="361.6" y="455.8" font-size="10.75" fill="#1a1a1a" textLength="61.6" lengthAdjust="spacingAndGlyphs" stroke="#1a1a1a" stroke-width="0.24">350*250*18</text>
<text x="496.6" y="455.8" font-size="11.2" fill="#1a1a1a" text-anchor="end" stroke="#1a1a1a" stroke-width="0.24">50</text>
<text x="508.9" y="455.8" font-size="10.2" fill="#1a1a1a" textLength="50.8" lengthAdjust="spacingAndGlyphs" stroke="#1a1a1a" stroke-width="0.24">#########</text>
<g transform="translate(634.88 455.8) scale(1)">
<path d="M1.7 0V-7.6H4.1C5.8 -7.6 6.0 -6.5 6.0 -5.5C6.0 -4.4 5.6 -3.3 4.1 -3.3H0.4M0.4 -1.7H4.3" fill="none" stroke="#1a1a1a" stroke-width="1.2"/>
</g>
<text x="632" y="455.8" font-size="11.3" fill="#1a1a1a" text-anchor="end" stroke="#1a1a1a" stroke-width="0.24">212,00</text>
<g transform="translate(722.08 455.8) scale(1)">
<path d="M1.7 0V-7.6H4.1C5.8 -7.6 6.0 -6.5 6.0 -5.5C6.0 -4.4 5.6 -3.3 4.1 -3.3H0.4M0.4 -1.7H4.3" fill="none" stroke="#1a1a1a" stroke-width="1.2"/>
</g>
<text x="719.2" y="455.8" font-size="11.3" fill="#1a1a1a" text-anchor="end" stroke="#1a1a1a" stroke-width="0.24">53 000,00</text>
<g transform="translate(808.88 455.8) scale(1)">
<path d="M1.7 0V-7.6H4.1C5.8 -7.6 6.0 -6.5 6.0 -5.5C6.0 -4.4 5.6 -3.3 4.1 -3.3H0.4M0.4 -1.7H4.3" fill="none" stroke="#1a1a1a" stroke-width="1.2"/>
</g>
<text x="806" y="455.8" font-size="11.3" fill="#1a1a1a" text-anchor="end" stroke="#1a1a1a" stroke-width="0.24">460,00</text>
<text x="53" y="472.2" font-size="11.2" fill="#1a1a1a" text-anchor="end" stroke="#1a1a1a" stroke-width="0.24">7</text>
<text x="58.4" y="472.2" font-size="10.7" fill="#2f75cf" textLength="81.2" lengthAdjust="spacingAndGlyphs" stroke="#2f75cf" stroke-width="0.24">Яйцо полосатое</text>
<line x1="58.2" y1="473.45" x2="139.8" y2="473.45" stroke="#2f75cf" stroke-width="0.8"/>
<text x="178.7" y="472.2" font-size="10.7" fill="#1a1a1a" textLength="81.2" lengthAdjust="spacingAndGlyphs" stroke="#1a1a1a" stroke-width="0.24">Яйцо полосатое</text>
<text x="361.6" y="472.2" font-size="10.75" fill="#1a1a1a" textLength="61.6" lengthAdjust="spacingAndGlyphs" stroke="#1a1a1a" stroke-width="0.24">300*240*16</text>
<text x="496.6" y="472.2" font-size="11.2" fill="#1a1a1a" text-anchor="end" stroke="#1a1a1a" stroke-width="0.24">50</text>
<g transform="translate(550.98 472.2) scale(1)">
<path d="M1.7 0V-7.6H4.1C5.8 -7.6 6.0 -6.5 6.0 -5.5C6.0 -4.4 5.6 -3.3 4.1 -3.3H0.4M0.4 -1.7H4.3" fill="none" stroke="#1a1a1a" stroke-width="1.2"/>
</g>
<text x="548.1" y="472.2" font-size="11.3" fill="#1a1a1a" text-anchor="end" stroke="#1a1a1a" stroke-width="0.24">760,00</text>
<g transform="translate(634.88 472.2) scale(1)">
<path d="M1.7 0V-7.6H4.1C5.8 -7.6 6.0 -6.5 6.0 -5.5C6.0 -4.4 5.6 -3.3 4.1 -3.3H0.4M0.4 -1.7H4.3" fill="none" stroke="#1a1a1a" stroke-width="1.2"/>
</g>
<text x="632" y="472.2" font-size="11.3" fill="#1a1a1a" text-anchor="end" stroke="#1a1a1a" stroke-width="0.24">152,00</text>
<g transform="translate(722.08 472.2) scale(1)">
<path d="M1.7 0V-7.6H4.1C5.8 -7.6 6.0 -6.5 6.0 -5.5C6.0 -4.4 5.6 -3.3 4.1 -3.3H0.4M0.4 -1.7H4.3" fill="none" stroke="#1a1a1a" stroke-width="1.2"/>
</g>
<text x="719.2" y="472.2" font-size="11.3" fill="#1a1a1a" text-anchor="end" stroke="#1a1a1a" stroke-width="0.24">38 000,00</text>
<g transform="translate(808.88 472.2) scale(1)">
<path d="M1.7 0V-7.6H4.1C5.8 -7.6 6.0 -6.5 6.0 -5.5C6.0 -4.4 5.6 -3.3 4.1 -3.3H0.4M0.4 -1.7H4.3" fill="none" stroke="#1a1a1a" stroke-width="1.2"/>
</g>
<text x="806" y="472.2" font-size="11.3" fill="#1a1a1a" text-anchor="end" stroke="#1a1a1a" stroke-width="0.24">280,00</text>
<text x="53" y="488.6" font-size="11.2" fill="#1a1a1a" text-anchor="end" stroke="#1a1a1a" stroke-width="0.24">8</text>
<text x="58.4" y="488.6" font-size="10.7" fill="#2f75cf" textLength="32" lengthAdjust="spacingAndGlyphs" stroke="#2f75cf" stroke-width="0.24">Лютня</text>
<line x1="58.2" y1="489.85" x2="90.6" y2="489.85" stroke="#2f75cf" stroke-width="0.8"/>
<text x="178.7" y="488.6" font-size="10.7" fill="#1a1a1a" textLength="32" lengthAdjust="spacingAndGlyphs" stroke="#1a1a1a" stroke-width="0.24">Лютня</text>
<text x="361.6" y="488.6" font-size="10.75" fill="#1a1a1a" textLength="61.6" lengthAdjust="spacingAndGlyphs" stroke="#1a1a1a" stroke-width="0.24">350*250*16</text>
<text x="496.6" y="488.6" font-size="11.2" fill="#1a1a1a" text-anchor="end" stroke="#1a1a1a" stroke-width="0.24">50</text>
<g transform="translate(550.98 488.6) scale(1)">
<path d="M1.7 0V-7.6H4.1C5.8 -7.6 6.0 -6.5 6.0 -5.5C6.0 -4.4 5.6 -3.3 4.1 -3.3H0.4M0.4 -1.7H4.3" fill="none" stroke="#1a1a1a" stroke-width="1.2"/>
</g>
<text x="548.1" y="488.6" font-size="11.3" fill="#1a1a1a" text-anchor="end" stroke="#1a1a1a" stroke-width="0.24">920,00</text>
<g transform="translate(634.88 488.6) scale(1)">
<path d="M1.7 0V-7.6H4.1C5.8 -7.6 6.0 -6.5 6.0 -5.5C6.0 -4.4 5.6 -3.3 4.1 -3.3H0.4M0.4 -1.7H4.3" fill="none" stroke="#1a1a1a" stroke-width="1.2"/>
</g>
<text x="632" y="488.6" font-size="11.3" fill="#1a1a1a" text-anchor="end" stroke="#1a1a1a" stroke-width="0.24">184,00</text>
<g transform="translate(722.08 488.6) scale(1)">
<path d="M1.7 0V-7.6H4.1C5.8 -7.6 6.0 -6.5 6.0 -5.5C6.0 -4.4 5.6 -3.3 4.1 -3.3H0.4M0.4 -1.7H4.3" fill="none" stroke="#1a1a1a" stroke-width="1.2"/>
</g>
<text x="719.2" y="488.6" font-size="11.3" fill="#1a1a1a" text-anchor="end" stroke="#1a1a1a" stroke-width="0.24">46 000,00</text>
<g transform="translate(808.88 488.6) scale(1)">
<path d="M1.7 0V-7.6H4.1C5.8 -7.6 6.0 -6.5 6.0 -5.5C6.0 -4.4 5.6 -3.3 4.1 -3.3H0.4M0.4 -1.7H4.3" fill="none" stroke="#1a1a1a" stroke-width="1.2"/>
</g>
<text x="806" y="488.6" font-size="11.3" fill="#1a1a1a" text-anchor="end" stroke="#1a1a1a" stroke-width="0.24">300,00</text>
<text x="53" y="505.1" font-size="11.2" fill="#1a1a1a" text-anchor="end" stroke="#1a1a1a" stroke-width="0.24">9</text>
<text x="58.4" y="505.1" font-size="10.7" fill="#2f75cf" textLength="63.9" lengthAdjust="spacingAndGlyphs" stroke="#2f75cf" stroke-width="0.24">Переветрыш</text>
<line x1="58.2" y1="506.35" x2="122.5" y2="506.35" stroke="#2f75cf" stroke-width="0.8"/>
<text x="178.7" y="505.1" font-size="10.7" fill="#1a1a1a" textLength="63.9" lengthAdjust="spacingAndGlyphs" stroke="#1a1a1a" stroke-width="0.24">Переветрыш</text>
<text x="361.6" y="505.1" font-size="10.75" fill="#1a1a1a" textLength="61.6" lengthAdjust="spacingAndGlyphs" stroke="#1a1a1a" stroke-width="0.24">350*250*16</text>
<text x="496.6" y="505.1" font-size="11.2" fill="#1a1a1a" text-anchor="end" stroke="#1a1a1a" stroke-width="0.24">50</text>
<g transform="translate(550.98 505.1) scale(1)">
<path d="M1.7 0V-7.6H4.1C5.8 -7.6 6.0 -6.5 6.0 -5.5C6.0 -4.4 5.6 -3.3 4.1 -3.3H0.4M0.4 -1.7H4.3" fill="none" stroke="#1a1a1a" stroke-width="1.2"/>
</g>
<text x="548.1" y="505.1" font-size="11.3" fill="#1a1a1a" text-anchor="end" stroke="#1a1a1a" stroke-width="0.24">950,00</text>
<g transform="translate(634.88 505.1) scale(1)">
<path d="M1.7 0V-7.6H4.1C5.8 -7.6 6.0 -6.5 6.0 -5.5C6.0 -4.4 5.6 -3.3 4.1 -3.3H0.4M0.4 -1.7H4.3" fill="none" stroke="#1a1a1a" stroke-width="1.2"/>
</g>
<text x="632" y="505.1" font-size="11.3" fill="#1a1a1a" text-anchor="end" stroke="#1a1a1a" stroke-width="0.24">190,00</text>
<g transform="translate(722.08 505.1) scale(1)">
<path d="M1.7 0V-7.6H4.1C5.8 -7.6 6.0 -6.5 6.0 -5.5C6.0 -4.4 5.6 -3.3 4.1 -3.3H0.4M0.4 -1.7H4.3" fill="none" stroke="#1a1a1a" stroke-width="1.2"/>
</g>
<text x="719.2" y="505.1" font-size="11.3" fill="#1a1a1a" text-anchor="end" stroke="#1a1a1a" stroke-width="0.24">47 500,00</text>
<g transform="translate(808.88 505.1) scale(1)">
<path d="M1.7 0V-7.6H4.1C5.8 -7.6 6.0 -6.5 6.0 -5.5C6.0 -4.4 5.6 -3.3 4.1 -3.3H0.4M0.4 -1.7H4.3" fill="none" stroke="#1a1a1a" stroke-width="1.2"/>
</g>
<text x="806" y="505.1" font-size="11.3" fill="#1a1a1a" text-anchor="end" stroke="#1a1a1a" stroke-width="0.24">250,00</text>
<text x="53" y="521.4" font-size="11.2" fill="#1a1a1a" text-anchor="end" stroke="#1a1a1a" stroke-width="0.24">10</text>
<text x="58.4" y="521.4" font-size="10.7" fill="#2f75cf" textLength="66.9" lengthAdjust="spacingAndGlyphs" stroke="#2f75cf" stroke-width="0.24">Классика дуб</text>
<line x1="58.2" y1="522.65" x2="125.5" y2="522.65" stroke="#2f75cf" stroke-width="0.8"/>
<text x="178.7" y="521.4" font-size="10.7" fill="#1a1a1a" textLength="66.9" lengthAdjust="spacingAndGlyphs" stroke="#1a1a1a" stroke-width="0.24">Классика дуб</text>
<text x="361.6" y="521.4" font-size="10.75" fill="#1a1a1a" textLength="61.6" lengthAdjust="spacingAndGlyphs" stroke="#1a1a1a" stroke-width="0.24">350*250*25</text>
<text x="496.6" y="521.4" font-size="11.2" fill="#1a1a1a" text-anchor="end" stroke="#1a1a1a" stroke-width="0.24">50</text>
<text x="508.9" y="521.4" font-size="10.2" fill="#1a1a1a" textLength="50.8" lengthAdjust="spacingAndGlyphs" stroke="#1a1a1a" stroke-width="0.24">#########</text>
<g transform="translate(634.88 521.4) scale(1)">
<path d="M1.7 0V-7.6H4.1C5.8 -7.6 6.0 -6.5 6.0 -5.5C6.0 -4.4 5.6 -3.3 4.1 -3.3H0.4M0.4 -1.7H4.3" fill="none" stroke="#1a1a1a" stroke-width="1.2"/>
</g>
<text x="632" y="521.4" font-size="11.3" fill="#1a1a1a" text-anchor="end" stroke="#1a1a1a" stroke-width="0.24">300,00</text>
<g transform="translate(722.08 521.4) scale(1)">
<path d="M1.7 0V-7.6H4.1C5.8 -7.6 6.0 -6.5 6.0 -5.5C6.0 -4.4 5.6 -3.3 4.1 -3.3H0.4M0.4 -1.7H4.3" fill="none" stroke="#1a1a1a" stroke-width="1.2"/>
</g>
<text x="719.2" y="521.4" font-size="11.3" fill="#1a1a1a" text-anchor="end" stroke="#1a1a1a" stroke-width="0.24">75 000,00</text>
<g transform="translate(808.88 521.4) scale(1)">
<path d="M1.7 0V-7.6H4.1C5.8 -7.6 6.0 -6.5 6.0 -5.5C6.0 -4.4 5.6 -3.3 4.1 -3.3H0.4M0.4 -1.7H4.3" fill="none" stroke="#1a1a1a" stroke-width="1.2"/>
</g>
<text x="806" y="521.4" font-size="11.3" fill="#1a1a1a" text-anchor="end" stroke="#1a1a1a" stroke-width="0.24">400,00</text>
<text x="53" y="537.5" font-size="11.2" fill="#1a1a1a" text-anchor="end" stroke="#1a1a1a" stroke-width="0.24">11</text>
<text x="58.4" y="537.5" font-size="10.7" fill="#2f75cf" textLength="54.2" lengthAdjust="spacingAndGlyphs" stroke="#2f75cf" stroke-width="0.24">Полосатик</text>
<line x1="58.2" y1="538.75" x2="112.8" y2="538.75" stroke="#2f75cf" stroke-width="0.8"/>
<text x="178.7" y="537.5" font-size="10.7" fill="#1a1a1a" textLength="54.2" lengthAdjust="spacingAndGlyphs" stroke="#1a1a1a" stroke-width="0.24">Полосатик</text>
<text x="361.6" y="537.5" font-size="10.75" fill="#1a1a1a" textLength="61.6" lengthAdjust="spacingAndGlyphs" stroke="#1a1a1a" stroke-width="0.24">350*250*16</text>
<text x="496.6" y="537.5" font-size="11.2" fill="#1a1a1a" text-anchor="end" stroke="#1a1a1a" stroke-width="0.24">50</text>
<g transform="translate(550.98 537.5) scale(1)">
<path d="M1.7 0V-7.6H4.1C5.8 -7.6 6.0 -6.5 6.0 -5.5C6.0 -4.4 5.6 -3.3 4.1 -3.3H0.4M0.4 -1.7H4.3" fill="none" stroke="#1a1a1a" stroke-width="1.2"/>
</g>
<text x="548.1" y="537.5" font-size="11.3" fill="#1a1a1a" text-anchor="end" stroke="#1a1a1a" stroke-width="0.24">800,00</text>
<g transform="translate(634.88 537.5) scale(1)">
<path d="M1.7 0V-7.6H4.1C5.8 -7.6 6.0 -6.5 6.0 -5.5C6.0 -4.4 5.6 -3.3 4.1 -3.3H0.4M0.4 -1.7H4.3" fill="none" stroke="#1a1a1a" stroke-width="1.2"/>
</g>
<text x="632" y="537.5" font-size="11.3" fill="#1a1a1a" text-anchor="end" stroke="#1a1a1a" stroke-width="0.24">160,00</text>
<g transform="translate(722.08 537.5) scale(1)">
<path d="M1.7 0V-7.6H4.1C5.8 -7.6 6.0 -6.5 6.0 -5.5C6.0 -4.4 5.6 -3.3 4.1 -3.3H0.4M0.4 -1.7H4.3" fill="none" stroke="#1a1a1a" stroke-width="1.2"/>
</g>
<text x="719.2" y="537.5" font-size="11.3" fill="#1a1a1a" text-anchor="end" stroke="#1a1a1a" stroke-width="0.24">40 000,00</text>
<g transform="translate(808.88 537.5) scale(1)">
<path d="M1.7 0V-7.6H4.1C5.8 -7.6 6.0 -6.5 6.0 -5.5C6.0 -4.4 5.6 -3.3 4.1 -3.3H0.4M0.4 -1.7H4.3" fill="none" stroke="#1a1a1a" stroke-width="1.2"/>
</g>
<text x="806" y="537.5" font-size="11.3" fill="#1a1a1a" text-anchor="end" stroke="#1a1a1a" stroke-width="0.24">250,00</text>
<text x="53" y="554.1" font-size="11.2" fill="#1a1a1a" text-anchor="end" stroke="#1a1a1a" stroke-width="0.24">12</text>
<text x="58.4" y="554.1" font-size="10.7" fill="#2f75cf" textLength="29.3" lengthAdjust="spacingAndGlyphs" stroke="#2f75cf" stroke-width="0.24">Бочка</text>
<line x1="58.2" y1="555.35" x2="87.9" y2="555.35" stroke="#2f75cf" stroke-width="0.8"/>
<text x="178.7" y="554.1" font-size="10.7" fill="#1a1a1a" textLength="29.3" lengthAdjust="spacingAndGlyphs" stroke="#1a1a1a" stroke-width="0.24">Бочка</text>
<text x="361.6" y="554.1" font-size="10.75" fill="#1a1a1a" textLength="61.6" lengthAdjust="spacingAndGlyphs" stroke="#1a1a1a" stroke-width="0.24">400*250*18</text>
<text x="496.6" y="554.1" font-size="11.2" fill="#1a1a1a" text-anchor="end" stroke="#1a1a1a" stroke-width="0.24">50</text>
<g transform="translate(550.98 554.1) scale(1)">
<path d="M1.7 0V-7.6H4.1C5.8 -7.6 6.0 -6.5 6.0 -5.5C6.0 -4.4 5.6 -3.3 4.1 -3.3H0.4M0.4 -1.7H4.3" fill="none" stroke="#1a1a1a" stroke-width="1.2"/>
</g>
<text x="548.1" y="554.1" font-size="11.3" fill="#1a1a1a" text-anchor="end" stroke="#1a1a1a" stroke-width="0.24">850,00</text>
<g transform="translate(634.88 554.1) scale(1)">
<path d="M1.7 0V-7.6H4.1C5.8 -7.6 6.0 -6.5 6.0 -5.5C6.0 -4.4 5.6 -3.3 4.1 -3.3H0.4M0.4 -1.7H4.3" fill="none" stroke="#1a1a1a" stroke-width="1.2"/>
</g>
<text x="632" y="554.1" font-size="11.3" fill="#1a1a1a" text-anchor="end" stroke="#1a1a1a" stroke-width="0.24">170,00</text>
<g transform="translate(722.08 554.1) scale(1)">
<path d="M1.7 0V-7.6H4.1C5.8 -7.6 6.0 -6.5 6.0 -5.5C6.0 -4.4 5.6 -3.3 4.1 -3.3H0.4M0.4 -1.7H4.3" fill="none" stroke="#1a1a1a" stroke-width="1.2"/>
</g>
<text x="719.2" y="554.1" font-size="11.3" fill="#1a1a1a" text-anchor="end" stroke="#1a1a1a" stroke-width="0.24">42 500,00</text>
<g transform="translate(808.88 554.1) scale(1)">
<path d="M1.7 0V-7.6H4.1C5.8 -7.6 6.0 -6.5 6.0 -5.5C6.0 -4.4 5.6 -3.3 4.1 -3.3H0.4M0.4 -1.7H4.3" fill="none" stroke="#1a1a1a" stroke-width="1.2"/>
</g>
<text x="806" y="554.1" font-size="11.3" fill="#1a1a1a" text-anchor="end" stroke="#1a1a1a" stroke-width="0.24">270,00</text>
<text x="53" y="570.5" font-size="11.2" fill="#1a1a1a" text-anchor="end" stroke="#1a1a1a" stroke-width="0.24">13</text>
<text x="58.4" y="570.5" font-size="10.7" fill="#2f75cf" textLength="42.8" lengthAdjust="spacingAndGlyphs" stroke="#2f75cf" stroke-width="0.24">Льдинка</text>
<line x1="58.2" y1="571.75" x2="101.4" y2="571.75" stroke="#2f75cf" stroke-width="0.8"/>
<text x="178.7" y="570.5" font-size="10.7" fill="#1a1a1a" textLength="42.8" lengthAdjust="spacingAndGlyphs" stroke="#1a1a1a" stroke-width="0.24">Льдинка</text>
<text x="361.6" y="570.5" font-size="10.75" fill="#1a1a1a" textLength="61.6" lengthAdjust="spacingAndGlyphs" stroke="#1a1a1a" stroke-width="0.24">350*250*16</text>
<text x="496.6" y="570.5" font-size="11.2" fill="#1a1a1a" text-anchor="end" stroke="#1a1a1a" stroke-width="0.24">50</text>
<g transform="translate(550.98 570.5) scale(1)">
<path d="M1.7 0V-7.6H4.1C5.8 -7.6 6.0 -6.5 6.0 -5.5C6.0 -4.4 5.6 -3.3 4.1 -3.3H0.4M0.4 -1.7H4.3" fill="none" stroke="#1a1a1a" stroke-width="1.2"/>
</g>
<text x="548.1" y="570.5" font-size="11.3" fill="#1a1a1a" text-anchor="end" stroke="#1a1a1a" stroke-width="0.24">750,00</text>
<g transform="translate(634.88 570.5) scale(1)">
<path d="M1.7 0V-7.6H4.1C5.8 -7.6 6.0 -6.5 6.0 -5.5C6.0 -4.4 5.6 -3.3 4.1 -3.3H0.4M0.4 -1.7H4.3" fill="none" stroke="#1a1a1a" stroke-width="1.2"/>
</g>
<text x="632" y="570.5" font-size="11.3" fill="#1a1a1a" text-anchor="end" stroke="#1a1a1a" stroke-width="0.24">150,00</text>
<g transform="translate(722.08 570.5) scale(1)">
<path d="M1.7 0V-7.6H4.1C5.8 -7.6 6.0 -6.5 6.0 -5.5C6.0 -4.4 5.6 -3.3 4.1 -3.3H0.4M0.4 -1.7H4.3" fill="none" stroke="#1a1a1a" stroke-width="1.2"/>
</g>
<text x="719.2" y="570.5" font-size="11.3" fill="#1a1a1a" text-anchor="end" stroke="#1a1a1a" stroke-width="0.24">37 500,00</text>
<g transform="translate(808.88 570.5) scale(1)">
<path d="M1.7 0V-7.6H4.1C5.8 -7.6 6.0 -6.5 6.0 -5.5C6.0 -4.4 5.6 -3.3 4.1 -3.3H0.4M0.4 -1.7H4.3" fill="none" stroke="#1a1a1a" stroke-width="1.2"/>
</g>
<text x="806" y="570.5" font-size="11.3" fill="#1a1a1a" text-anchor="end" stroke="#1a1a1a" stroke-width="0.24">250,00</text>
<text x="53" y="586.9" font-size="11.2" fill="#1a1a1a" text-anchor="end" stroke="#1a1a1a" stroke-width="0.24">14</text>
<text x="58.4" y="586.9" font-size="10.7" fill="#2f75cf" textLength="95.9" lengthAdjust="spacingAndGlyphs" stroke="#2f75cf" stroke-width="0.24">Поднос полосатый</text>
<line x1="58.2" y1="588.15" x2="154.5" y2="588.15" stroke="#2f75cf" stroke-width="0.8"/>
<text x="178.7" y="586.9" font-size="10.7" fill="#1a1a1a" textLength="95.9" lengthAdjust="spacingAndGlyphs" stroke="#1a1a1a" stroke-width="0.24">Поднос полосатый</text>
<text x="361.6" y="586.9" font-size="10.75" fill="#1a1a1a" textLength="61.6" lengthAdjust="spacingAndGlyphs" stroke="#1a1a1a" stroke-width="0.24">400*250*16</text>
<text x="496.6" y="586.9" font-size="11.2" fill="#1a1a1a" text-anchor="end" stroke="#1a1a1a" stroke-width="0.24">50</text>
<text x="508.9" y="586.9" font-size="10.2" fill="#1a1a1a" textLength="50.8" lengthAdjust="spacingAndGlyphs" stroke="#1a1a1a" stroke-width="0.24">#########</text>
<g transform="translate(634.88 586.9) scale(1)">
<path d="M1.7 0V-7.6H4.1C5.8 -7.6 6.0 -6.5 6.0 -5.5C6.0 -4.4 5.6 -3.3 4.1 -3.3H0.4M0.4 -1.7H4.3" fill="none" stroke="#1a1a1a" stroke-width="1.2"/>
</g>
<text x="632" y="586.9" font-size="11.3" fill="#1a1a1a" text-anchor="end" stroke="#1a1a1a" stroke-width="0.24">210,00</text>
<g transform="translate(722.08 586.9) scale(1)">
<path d="M1.7 0V-7.6H4.1C5.8 -7.6 6.0 -6.5 6.0 -5.5C6.0 -4.4 5.6 -3.3 4.1 -3.3H0.4M0.4 -1.7H4.3" fill="none" stroke="#1a1a1a" stroke-width="1.2"/>
</g>
<text x="719.2" y="586.9" font-size="11.3" fill="#1a1a1a" text-anchor="end" stroke="#1a1a1a" stroke-width="0.24">52 500,00</text>
<g transform="translate(808.88 586.9) scale(1)">
<path d="M1.7 0V-7.6H4.1C5.8 -7.6 6.0 -6.5 6.0 -5.5C6.0 -4.4 5.6 -3.3 4.1 -3.3H0.4M0.4 -1.7H4.3" fill="none" stroke="#1a1a1a" stroke-width="1.2"/>
</g>
<text x="806" y="586.9" font-size="11.3" fill="#1a1a1a" text-anchor="end" stroke="#1a1a1a" stroke-width="0.24">350,00</text>
<text x="53" y="603.4" font-size="11.2" fill="#1a1a1a" text-anchor="end" stroke="#1a1a1a" stroke-width="0.24">15</text>
<text x="58.4" y="603.4" font-size="10.7" fill="#2f75cf" textLength="83.2" lengthAdjust="spacingAndGlyphs" stroke="#2f75cf" stroke-width="0.24">Классика береза</text>
<line x1="58.2" y1="604.65" x2="141.8" y2="604.65" stroke="#2f75cf" stroke-width="0.8"/>
<text x="178.7" y="603.4" font-size="10.7" fill="#1a1a1a" textLength="83.2" lengthAdjust="spacingAndGlyphs" stroke="#1a1a1a" stroke-width="0.24">Классика береза</text>
<text x="361.6" y="603.4" font-size="10.75" fill="#1a1a1a" textLength="61.6" lengthAdjust="spacingAndGlyphs" stroke="#1a1a1a" stroke-width="0.24">350*250*25</text>
<text x="496.6" y="603.4" font-size="11.2" fill="#1a1a1a" text-anchor="end" stroke="#1a1a1a" stroke-width="0.24">50</text>
<text x="508.9" y="603.4" font-size="10.2" fill="#1a1a1a" textLength="50.8" lengthAdjust="spacingAndGlyphs" stroke="#1a1a1a" stroke-width="0.24">#########</text>
<g transform="translate(634.88 603.4) scale(1)">
<path d="M1.7 0V-7.6H4.1C5.8 -7.6 6.0 -6.5 6.0 -5.5C6.0 -4.4 5.6 -3.3 4.1 -3.3H0.4M0.4 -1.7H4.3" fill="none" stroke="#1a1a1a" stroke-width="1.2"/>
</g>
<text x="632" y="603.4" font-size="11.3" fill="#1a1a1a" text-anchor="end" stroke="#1a1a1a" stroke-width="0.24">300,00</text>
<g transform="translate(722.08 603.4) scale(1)">
<path d="M1.7 0V-7.6H4.1C5.8 -7.6 6.0 -6.5 6.0 -5.5C6.0 -4.4 5.6 -3.3 4.1 -3.3H0.4M0.4 -1.7H4.3" fill="none" stroke="#1a1a1a" stroke-width="1.2"/>
</g>
<text x="719.2" y="603.4" font-size="11.3" fill="#1a1a1a" text-anchor="end" stroke="#1a1a1a" stroke-width="0.24">75 000,00</text>
<g transform="translate(808.88 603.4) scale(1)">
<path d="M1.7 0V-7.6H4.1C5.8 -7.6 6.0 -6.5 6.0 -5.5C6.0 -4.4 5.6 -3.3 4.1 -3.3H0.4M0.4 -1.7H4.3" fill="none" stroke="#1a1a1a" stroke-width="1.2"/>
</g>
<text x="806" y="603.4" font-size="11.3" fill="#1a1a1a" text-anchor="end" stroke="#1a1a1a" stroke-width="0.24">300,00</text>
<text x="496.6" y="620.3" font-size="11.2" fill="#1a1a1a" text-anchor="end" stroke="#1a1a1a" stroke-width="0.24">750</text>
<g transform="translate(722.08 620.3) scale(1)">
<path d="M1.7 0V-7.6H4.1C5.8 -7.6 6.0 -6.5 6.0 -5.5C6.0 -4.4 5.6 -3.3 4.1 -3.3H0.4M0.4 -1.7H4.3" fill="none" stroke="#1a1a1a" stroke-width="1.2"/>
</g>
<text x="719.2" y="620.3" font-size="11.3" fill="#1a1a1a" text-anchor="end" stroke="#1a1a1a" stroke-width="0.24">696 600,00</text>
<g transform="translate(808.88 620.3) scale(1)">
<path d="M1.7 0V-7.6H4.1C5.8 -7.6 6.0 -6.5 6.0 -5.5C6.0 -4.4 5.6 -3.3 4.1 -3.3H0.4M0.4 -1.7H4.3" fill="none" stroke="#1a1a1a" stroke-width="1.2"/>
</g>
<text x="806" y="620.3" font-size="11.3" fill="#1a1a1a" text-anchor="end" stroke="#1a1a1a" stroke-width="0.24">219 000,00</text>
<text x="53" y="707.9" font-size="11.2" fill="#1a1a1a" text-anchor="end" stroke="#1a1a1a" stroke-width="0.24">1</text>
<text x="58.4" y="707.9" font-size="10.7" fill="#2f75cf" textLength="57.8" lengthAdjust="spacingAndGlyphs" stroke="#2f75cf" stroke-width="0.24">Чистый дуб</text>
<line x1="58.2" y1="709.15" x2="116.4" y2="709.15" stroke="#2f75cf" stroke-width="0.8"/>
<text x="178.7" y="707.9" font-size="10.7" fill="#1a1a1a" textLength="57.8" lengthAdjust="spacingAndGlyphs" stroke="#1a1a1a" stroke-width="0.24">Чистый дуб</text>
<text x="361.6" y="707.9" font-size="10.75" fill="#1a1a1a" textLength="61.6" lengthAdjust="spacingAndGlyphs" stroke="#1a1a1a" stroke-width="0.24">400*280*30</text>
<text x="496.6" y="707.9" font-size="11.2" fill="#1a1a1a" text-anchor="end" stroke="#1a1a1a" stroke-width="0.24">20</text>
<text x="561.1" y="707.9" font-size="11.2" fill="#1a1a1a" text-anchor="end" stroke="#1a1a1a" stroke-width="0.24">2750</text>
<text x="645" y="707.9" font-size="11.2" fill="#1a1a1a" text-anchor="end" stroke="#1a1a1a" stroke-width="0.24">550</text>
<g transform="translate(722.08 707.9) scale(1)">
<path d="M1.7 0V-7.6H4.1C5.8 -7.6 6.0 -6.5 6.0 -5.5C6.0 -4.4 5.6 -3.3 4.1 -3.3H0.4M0.4 -1.7H4.3" fill="none" stroke="#1a1a1a" stroke-width="1.2"/>
</g>
<text x="719.2" y="707.9" font-size="11.3" fill="#1a1a1a" text-anchor="end" stroke="#1a1a1a" stroke-width="0.24">55 000,00</text>
<g transform="translate(808.88 707.9) scale(1)">
<path d="M1.7 0V-7.6H4.1C5.8 -7.6 6.0 -6.5 6.0 -5.5C6.0 -4.4 5.6 -3.3 4.1 -3.3H0.4M0.4 -1.7H4.3" fill="none" stroke="#1a1a1a" stroke-width="1.2"/>
</g>
<text x="806" y="707.9" font-size="11.3" fill="#1a1a1a" text-anchor="end" stroke="#1a1a1a" stroke-width="0.24">954,00</text>
<line x1="24" y1="344.1" x2="822.3" y2="344.1" stroke="#000" stroke-width="1.45"/>
<line x1="24" y1="360.9" x2="821.5" y2="360.9" stroke="#222" stroke-width="0.95"/>
<line x1="24" y1="377.3" x2="821.5" y2="377.3" stroke="#222" stroke-width="0.95"/>
<line x1="24" y1="393.6" x2="821.5" y2="393.6" stroke="#222" stroke-width="0.95"/>
<line x1="24" y1="410.1" x2="821.5" y2="410.1" stroke="#222" stroke-width="0.95"/>
<line x1="24" y1="426.5" x2="821.5" y2="426.5" stroke="#222" stroke-width="0.95"/>
<line x1="24" y1="442.7" x2="821.5" y2="442.7" stroke="#222" stroke-width="0.95"/>
<line x1="24" y1="459.1" x2="821.5" y2="459.1" stroke="#222" stroke-width="0.95"/>
<line x1="24" y1="475.5" x2="821.5" y2="475.5" stroke="#222" stroke-width="0.95"/>
<line x1="24" y1="491.9" x2="821.5" y2="491.9" stroke="#222" stroke-width="0.95"/>
<line x1="24" y1="508.4" x2="821.5" y2="508.4" stroke="#222" stroke-width="0.95"/>
<line x1="24" y1="524.7" x2="821.5" y2="524.7" stroke="#222" stroke-width="0.95"/>
<line x1="24" y1="540.8" x2="821.5" y2="540.8" stroke="#222" stroke-width="0.95"/>
<line x1="24" y1="557.4" x2="821.5" y2="557.4" stroke="#222" stroke-width="0.95"/>
<line x1="24" y1="573.8" x2="821.5" y2="573.8" stroke="#222" stroke-width="0.95"/>
<line x1="24" y1="590.2" x2="821.5" y2="590.2" stroke="#222" stroke-width="0.95"/>
<line x1="24" y1="606.7" x2="821.5" y2="606.7" stroke="#000" stroke-width="1.3"/>
<line x1="24" y1="623.6" x2="822.3" y2="623.6" stroke="#000" stroke-width="1.45"/>
<line x1="55.6" y1="344.1" x2="55.6" y2="623.6" stroke="#111" stroke-width="1.25"/>
<line x1="176.2" y1="344.1" x2="176.2" y2="623.6" stroke="#111" stroke-width="1"/>
<line x1="284.8" y1="344.1" x2="284.8" y2="623.6" stroke="#111" stroke-width="1"/>
<line x1="358.5" y1="344.1" x2="358.5" y2="623.6" stroke="#111" stroke-width="1"/>
<line x1="432.7" y1="344.1" x2="432.7" y2="623.6" stroke="#111" stroke-width="1"/>
<line x1="499.1" y1="344.1" x2="499.1" y2="623.6" stroke="#111" stroke-width="1"/>
<line x1="563.6" y1="344.1" x2="563.6" y2="623.6" stroke="#111" stroke-width="1"/>
<line x1="647.5" y1="344.1" x2="647.5" y2="623.6" stroke="#111" stroke-width="1"/>
<line x1="734.7" y1="344.1" x2="734.7" y2="623.6" stroke="#111" stroke-width="1"/>
<line x1="821.5" y1="344.1" x2="821.5" y2="623.6" stroke="#000" stroke-width="1.45"/>
<line x1="24" y1="677.7" x2="822.3" y2="677.7" stroke="#000" stroke-width="1.45"/>
<line x1="24" y1="694.4" x2="821.5" y2="694.4" stroke="#222" stroke-width="0.95"/>
<line x1="24" y1="711.2" x2="821.5" y2="711.2" stroke="#222" stroke-width="0.95"/>
<line x1="55.6" y1="677.7" x2="55.6" y2="712.6" stroke="#111" stroke-width="1.25"/>
<line x1="176.2" y1="677.7" x2="176.2" y2="712.6" stroke="#111" stroke-width="1"/>
<line x1="284.8" y1="677.7" x2="284.8" y2="712.6" stroke="#111" stroke-width="1"/>
<line x1="358.5" y1="677.7" x2="358.5" y2="712.6" stroke="#111" stroke-width="1"/>
<line x1="432.7" y1="677.7" x2="432.7" y2="712.6" stroke="#111" stroke-width="1"/>
<line x1="499.1" y1="677.7" x2="499.1" y2="712.6" stroke="#111" stroke-width="1"/>
<line x1="563.6" y1="677.7" x2="563.6" y2="712.6" stroke="#111" stroke-width="1"/>
<line x1="647.5" y1="677.7" x2="647.5" y2="712.6" stroke="#111" stroke-width="1"/>
<line x1="734.7" y1="677.7" x2="734.7" y2="712.6" stroke="#111" stroke-width="1"/>
<line x1="821.5" y1="677.7" x2="821.5" y2="712.6" stroke="#000" stroke-width="1.45"/>
</g>
<line x1="1350.6" y1="188.3" x2="1350.6" y2="710.6" stroke="#a8a8a8" stroke-width="1.2"/>
<line x1="0" y1="710.6" x2="1351.2" y2="710.6" stroke="#a8a8a8" stroke-width="1"/>
<rect x="1351.4" y="172.4" width="14.6" height="540" fill="#e6e6e6"/>
<rect x="1353.4" y="174.4" width="10.2" height="10" fill="#fff" stroke="#b8b8b8" stroke-width="0.8"/>
<path d="M1356.2 180.6L1358.5 178.0L1360.8 180.6Z" fill="#666"/>
<rect x="1353.4" y="185" width="10.2" height="516" fill="#d9d9d9"/>
<rect x="1353.6" y="185" width="9.9" height="362.4" fill="#fff" stroke="#b4b4b4" stroke-width="0.9"/>
<rect x="1353.4" y="701.2" width="10.2" height="10" fill="#fff" stroke="#b8b8b8" stroke-width="0.8"/>
<path d="M1356.2 705.0L1358.5 707.6L1360.8 705.0Z" fill="#666"/>
<rect x="0" y="711.1" width="1366" height="19.6" fill="#e6e6e6"/>
<path d="M22.0 717.8L19.6 720.4L22.0 723.0Z" fill="#c2c2c2"/>
<path d="M39.6 717.8L42.0 720.4L39.6 723.0Z" fill="#c2c2c2"/>
<rect x="71.5" y="710.6" width="42" height="17" fill="#fff"/>
<line x1="71.5" y1="727.6" x2="113.6" y2="727.6" stroke="#217346" stroke-width="1.5"/>
<text x="79.8" y="723.4" font-size="9.2" fill="#217346" font-weight="bold" textLength="24.6" lengthAdjust="spacingAndGlyphs" stroke="#217346" stroke-width="0.24">Лист1</text>
<circle cx="142.8" cy="720.5" r="5" fill="none" stroke="#8a8a8a" stroke-width="0.85"/>
<path d="M140.2 720.5H145.4M142.8 717.9V723.1" fill="none" stroke="#777" stroke-width="0.9"/>
<circle cx="820.2" cy="718.2" r="0.55" fill="#aaa"/>
<circle cx="820.2" cy="720.6" r="0.55" fill="#aaa"/>
<circle cx="820.2" cy="723" r="0.55" fill="#aaa"/>
<rect x="831.8" y="716.2" width="518.8" height="10.2" fill="#d9d9d9"/>
<rect x="831.8" y="716.2" width="10.4" height="10.2" fill="#fff" stroke="#b8b8b8" stroke-width="0.8"/>
<path d="M838.2 718.9L835.6 721.3L838.2 723.7Z" fill="#555"/>
<rect x="842.6" y="716.3" width="472.6" height="10" fill="#fff" stroke="#b4b4b4" stroke-width="0.9"/>
<rect x="1340.6" y="716.2" width="10" height="10.2" fill="#fff" stroke="#b8b8b8" stroke-width="0.8"/>
<path d="M1344.4 718.9L1347.0 721.3L1344.4 723.7Z" fill="#555"/>
<rect x="0" y="730.7" width="1366" height="16.3" fill="#f3f3f3"/>
<line x1="0" y1="730.4" x2="1366" y2="730.4" stroke="#d8d8d8" stroke-width="0.9"/>
<rect x="1160.6" y="731" width="26.4" height="16" fill="#c8c8c8"/>
<rect x="1169.4" y="733.6" width="8.8" height="8.8" fill="none" stroke="#666" stroke-width="0.85"/>
<line x1="1172.33" y1="733.6" x2="1172.33" y2="742.4" stroke="#666" stroke-width="0.8"/>
<line x1="1175.27" y1="733.6" x2="1175.27" y2="742.4" stroke="#666" stroke-width="0.8"/>
<line x1="1169.4" y1="736.53" x2="1178.2" y2="736.53" stroke="#666" stroke-width="0.8"/>
<line x1="1169.4" y1="739.47" x2="1178.2" y2="739.47" stroke="#666" stroke-width="0.8"/>
<rect x="1196.4" y="733.6" width="8.8" height="8.8" fill="none" stroke="#666" stroke-width="0.85"/>
<rect x="1198.8" y="735.6" width="4" height="5" fill="none" stroke="#888" stroke-width="0.8"/>
<rect x="1223.6" y="733.6" width="8.8" height="8.8" fill="none" stroke="#666" stroke-width="0.85"/>
<path d="M1226.6 733.6V738.6H1229.4V733.6M1223.6 738.6H1232.4" fill="none" stroke="#666" stroke-width="0.8"/>
<line x1="1244.6" y1="738.3" x2="1249.4" y2="738.3" stroke="#444" stroke-width="1.3"/>
<line x1="1252.4" y1="738.3" x2="1323" y2="738.3" stroke="#b5b5b5" stroke-width="0.9"/>
<rect x="1288" y="733.4" width="3.2" height="9.8" fill="#555"/>
<path d="M1325.6 738.3H1331.2M1328.4 735.5V741.1" fill="none" stroke="#444" stroke-width="1.2"/>
<text x="1339.9" y="741.2" font-size="7.5" fill="#444" stroke="#444" stroke-width="0.12">115 %</text>
</svg></body></html>
